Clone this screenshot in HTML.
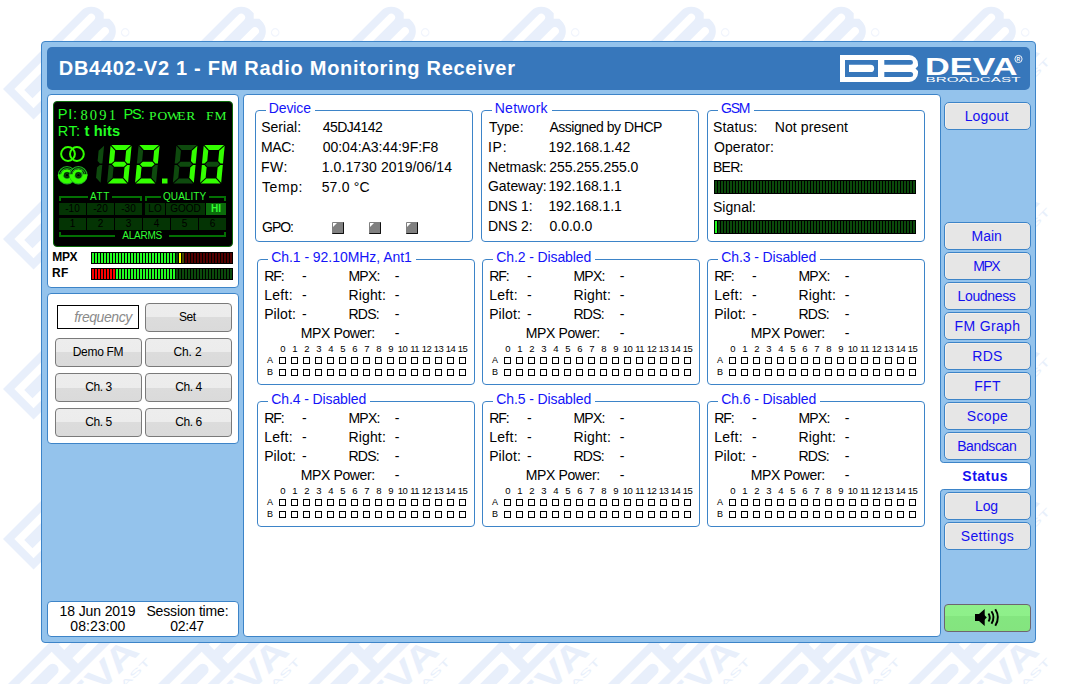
<!DOCTYPE html><html><head><meta charset="utf-8"><style>html,body{margin:0;padding:0;}body{width:1077px;height:684px;position:relative;overflow:hidden;background:#fff;font-family:'Liberation Sans', sans-serif;}</style></head><body>
<svg style="position:absolute;left:0;top:0" width="1051" height="684"><defs><g id="lg"><path fill="#e8effb" d="M0 0 H69 A9 9 0 0 1 78 9 V11 L75.5 13.5 L78 16 V18 A9 9 0 0 1 69 27 H0 Z"/><rect x="5" y="5" width="33" height="17" fill="#fff"/><path fill="#e8effb" d="M9 9.8 H30.5 A3.6 3.6 0 0 1 30.5 17.1 H9 Z"/><path fill="#fff" d="M44.3 5 H70.6 A2.4 2.4 0 0 1 70.6 9.8 H44.3 Z"/><path fill="#fff" d="M44.3 17 H70.6 A2.5 2.5 0 0 1 70.6 22 H44.3 Z"/><text x="2" y="44.8" font-family="Liberation Sans" font-weight="700" font-size="21" fill="#e8effb" textLength="75" lengthAdjust="spacingAndGlyphs">DEVA</text><text x="0.5" y="53.5" font-family="Liberation Sans" font-size="6" fill="#e8effb" textLength="77" lengthAdjust="spacingAndGlyphs">BROADCAST</text><circle cx="79" cy="29" r="2.3" fill="none" stroke="#f1f5fd" stroke-width="0.8"/></g></defs><use href="#lg" transform="translate(-297,-61) rotate(-45) scale(1.6)"/><use href="#lg" transform="translate(-297,89) rotate(-45) scale(1.6)"/><use href="#lg" transform="translate(-297,239) rotate(-45) scale(1.6)"/><use href="#lg" transform="translate(-297,389) rotate(-45) scale(1.6)"/><use href="#lg" transform="translate(-297,539) rotate(-45) scale(1.6)"/><use href="#lg" transform="translate(-297,689) rotate(-45) scale(1.6)"/><use href="#lg" transform="translate(-297,839) rotate(-45) scale(1.6)"/><use href="#lg" transform="translate(-147,-61) rotate(-45) scale(1.6)"/><use href="#lg" transform="translate(-147,89) rotate(-45) scale(1.6)"/><use href="#lg" transform="translate(-147,239) rotate(-45) scale(1.6)"/><use href="#lg" transform="translate(-147,389) rotate(-45) scale(1.6)"/><use href="#lg" transform="translate(-147,539) rotate(-45) scale(1.6)"/><use href="#lg" transform="translate(-147,689) rotate(-45) scale(1.6)"/><use href="#lg" transform="translate(-147,839) rotate(-45) scale(1.6)"/><use href="#lg" transform="translate(3,-61) rotate(-45) scale(1.6)"/><use href="#lg" transform="translate(3,89) rotate(-45) scale(1.6)"/><use href="#lg" transform="translate(3,239) rotate(-45) scale(1.6)"/><use href="#lg" transform="translate(3,389) rotate(-45) scale(1.6)"/><use href="#lg" transform="translate(3,539) rotate(-45) scale(1.6)"/><use href="#lg" transform="translate(3,689) rotate(-45) scale(1.6)"/><use href="#lg" transform="translate(3,839) rotate(-45) scale(1.6)"/><use href="#lg" transform="translate(153,-61) rotate(-45) scale(1.6)"/><use href="#lg" transform="translate(153,89) rotate(-45) scale(1.6)"/><use href="#lg" transform="translate(153,239) rotate(-45) scale(1.6)"/><use href="#lg" transform="translate(153,389) rotate(-45) scale(1.6)"/><use href="#lg" transform="translate(153,539) rotate(-45) scale(1.6)"/><use href="#lg" transform="translate(153,689) rotate(-45) scale(1.6)"/><use href="#lg" transform="translate(153,839) rotate(-45) scale(1.6)"/><use href="#lg" transform="translate(303,-61) rotate(-45) scale(1.6)"/><use href="#lg" transform="translate(303,89) rotate(-45) scale(1.6)"/><use href="#lg" transform="translate(303,239) rotate(-45) scale(1.6)"/><use href="#lg" transform="translate(303,389) rotate(-45) scale(1.6)"/><use href="#lg" transform="translate(303,539) rotate(-45) scale(1.6)"/><use href="#lg" transform="translate(303,689) rotate(-45) scale(1.6)"/><use href="#lg" transform="translate(303,839) rotate(-45) scale(1.6)"/><use href="#lg" transform="translate(453,-61) rotate(-45) scale(1.6)"/><use href="#lg" transform="translate(453,89) rotate(-45) scale(1.6)"/><use href="#lg" transform="translate(453,239) rotate(-45) scale(1.6)"/><use href="#lg" transform="translate(453,389) rotate(-45) scale(1.6)"/><use href="#lg" transform="translate(453,539) rotate(-45) scale(1.6)"/><use href="#lg" transform="translate(453,689) rotate(-45) scale(1.6)"/><use href="#lg" transform="translate(453,839) rotate(-45) scale(1.6)"/><use href="#lg" transform="translate(603,-61) rotate(-45) scale(1.6)"/><use href="#lg" transform="translate(603,89) rotate(-45) scale(1.6)"/><use href="#lg" transform="translate(603,239) rotate(-45) scale(1.6)"/><use href="#lg" transform="translate(603,389) rotate(-45) scale(1.6)"/><use href="#lg" transform="translate(603,539) rotate(-45) scale(1.6)"/><use href="#lg" transform="translate(603,689) rotate(-45) scale(1.6)"/><use href="#lg" transform="translate(603,839) rotate(-45) scale(1.6)"/><use href="#lg" transform="translate(753,-61) rotate(-45) scale(1.6)"/><use href="#lg" transform="translate(753,89) rotate(-45) scale(1.6)"/><use href="#lg" transform="translate(753,239) rotate(-45) scale(1.6)"/><use href="#lg" transform="translate(753,389) rotate(-45) scale(1.6)"/><use href="#lg" transform="translate(753,539) rotate(-45) scale(1.6)"/><use href="#lg" transform="translate(753,689) rotate(-45) scale(1.6)"/><use href="#lg" transform="translate(753,839) rotate(-45) scale(1.6)"/><use href="#lg" transform="translate(903,-61) rotate(-45) scale(1.6)"/><use href="#lg" transform="translate(903,89) rotate(-45) scale(1.6)"/><use href="#lg" transform="translate(903,239) rotate(-45) scale(1.6)"/><use href="#lg" transform="translate(903,389) rotate(-45) scale(1.6)"/><use href="#lg" transform="translate(903,539) rotate(-45) scale(1.6)"/><use href="#lg" transform="translate(903,689) rotate(-45) scale(1.6)"/><use href="#lg" transform="translate(903,839) rotate(-45) scale(1.6)"/></svg>
<div style="position:absolute;left:41px;top:41px;width:995px;height:602px;box-sizing:border-box;background:#94c3ec;border:1px solid #3d84c8;border-radius:4px;"></div>
<div style="position:absolute;left:47px;top:47px;width:983px;height:43px;box-sizing:border-box;background:#3777bb;border-radius:5px;"></div>
<div style="position:absolute;left:58.79px;top:57.77px;font-family:'Liberation Sans', sans-serif;font-size:20px;line-height:20px;font-weight:700;color:#fff;letter-spacing:0.717px;white-space:pre;"><span id="t0">DB4402-V2 1 - FM Radio Monitoring Receiver</span></div>
<svg style="position:absolute;left:838px;top:53px" width="190" height="32" viewBox="838 53 190 32"><path fill="#fff" d="M840 55 H909 A9 9 0 0 1 918 64 V66 L915.5 68.5 L918 71 V73 A9 9 0 0 1 909 82 H840 Z"/><rect x="845" y="60" width="33" height="17" fill="#3777bb"/><path fill="#fff" d="M849 64.8 H870.5 A3.6 3.6 0 0 1 870.5 72.1 H849 Z"/><path fill="#3777bb" d="M884.3 60 H910.6 A2.4 2.4 0 0 1 910.6 64.8 H884.3 Z"/><path fill="#3777bb" d="M884.3 72 H910.6 A2.5 2.5 0 0 1 910.6 77 H884.3 Z"/><text x="925" y="74.6" font-family="Liberation Sans" font-weight="700" font-size="24" fill="#fff" textLength="92.5" lengthAdjust="spacingAndGlyphs">DEVA</text><text x="925.5" y="81.8" font-family="Liberation Sans" font-size="6.4" fill="#fff" textLength="95" lengthAdjust="spacingAndGlyphs">BROADCAST</text><circle cx="1018.5" cy="59" r="3.6" fill="none" stroke="#fff" stroke-width="0.9"/><text x="1016.6" y="61" font-family="Liberation Sans" font-size="5" font-weight="700" fill="#fff">R</text></svg>
<div style="position:absolute;left:47px;top:94px;width:192px;height:194px;box-sizing:border-box;background:#fff;border:1px solid #3d84c8;border-radius:4px;"></div>
<div style="position:absolute;left:47px;top:293px;width:192px;height:151px;box-sizing:border-box;background:#fff;border:1px solid #3d84c8;border-radius:4px;"></div>
<div style="position:absolute;left:47px;top:601px;width:192px;height:36px;box-sizing:border-box;background:#fff;border:1px solid #3d84c8;border-radius:4px;"></div>
<div style="position:absolute;left:243px;top:94px;width:698px;height:543px;box-sizing:border-box;background:#fff;border:1px solid #3d84c8;border-radius:4px;"></div>
<div style="position:absolute;left:53px;top:101px;width:180px;height:146px;box-sizing:border-box;background:#000;border:1px solid #0b6b0b;border-radius:4px;"></div>
<div style="position:absolute;left:57.81px;top:107.14px;font-family:'Liberation Sans', sans-serif;font-size:14.6px;line-height:14.6px;font-weight:400;color:#22ff22;letter-spacing:0.714px;white-space:pre;"><span id="t1">PI:</span></div>
<div style="position:absolute;left:79.40px;top:107.73px;width:9.40px;text-align:center;font-family:'Liberation Serif', serif;font-size:14.5px;line-height:14.5px;color:#33ff33;white-space:pre;">8</div><div style="position:absolute;left:88.80px;top:107.73px;width:9.40px;text-align:center;font-family:'Liberation Serif', serif;font-size:14.5px;line-height:14.5px;color:#33ff33;white-space:pre;">0</div><div style="position:absolute;left:98.20px;top:107.73px;width:9.40px;text-align:center;font-family:'Liberation Serif', serif;font-size:14.5px;line-height:14.5px;color:#33ff33;white-space:pre;">9</div><div style="position:absolute;left:107.60px;top:107.73px;width:9.40px;text-align:center;font-family:'Liberation Serif', serif;font-size:14.5px;line-height:14.5px;color:#33ff33;white-space:pre;">1</div>
<div style="position:absolute;left:148.00px;top:108.56px;width:9.50px;text-align:center;font-family:'Liberation Serif', serif;font-size:13.5px;line-height:13.5px;color:#33ff33;white-space:pre;">P</div><div style="position:absolute;left:157.50px;top:108.56px;width:9.50px;text-align:center;font-family:'Liberation Serif', serif;font-size:13.5px;line-height:13.5px;color:#33ff33;white-space:pre;">O</div><div style="position:absolute;left:167.00px;top:108.56px;width:9.50px;text-align:center;font-family:'Liberation Serif', serif;font-size:13.5px;line-height:13.5px;color:#33ff33;white-space:pre;">W</div><div style="position:absolute;left:176.50px;top:108.56px;width:9.50px;text-align:center;font-family:'Liberation Serif', serif;font-size:13.5px;line-height:13.5px;color:#33ff33;white-space:pre;">E</div><div style="position:absolute;left:186.00px;top:108.56px;width:9.50px;text-align:center;font-family:'Liberation Serif', serif;font-size:13.5px;line-height:13.5px;color:#33ff33;white-space:pre;">R</div><div style="position:absolute;left:205.00px;top:108.56px;width:9.50px;text-align:center;font-family:'Liberation Serif', serif;font-size:13.5px;line-height:13.5px;color:#33ff33;white-space:pre;">F</div><div style="position:absolute;left:214.50px;top:108.56px;width:9.50px;text-align:center;font-family:'Liberation Serif', serif;font-size:13.5px;line-height:13.5px;color:#33ff33;white-space:pre;">M</div>
<div style="position:absolute;left:123.49px;top:107.14px;font-family:'Liberation Sans', sans-serif;font-size:14.6px;line-height:14.6px;font-weight:400;color:#22ff22;letter-spacing:-1.130px;white-space:pre;"><span id="t2">PS:</span></div>
<div style="position:absolute;left:57.81px;top:123.74px;font-family:'Liberation Sans', sans-serif;font-size:14.6px;line-height:14.6px;font-weight:400;color:#22ff22;letter-spacing:0.374px;white-space:pre;"><span id="t3">RT:</span></div>
<div style="position:absolute;left:84.46px;top:123.74px;font-family:'Liberation Sans', sans-serif;font-size:14.6px;line-height:14.6px;font-weight:700;color:#22ff22;letter-spacing:0.172px;white-space:pre;"><span id="t4">t hits</span></div>
<svg style="position:absolute;left:0;top:0" width="240" height="250" viewBox="0 0 240 250"><polygon points="104.09,145.70 102.40,163.55 99.90,163.55 97.63,161.05 98.62,150.70" fill="#0e4a0e"/><polygon points="102.26,164.95 100.57,182.80 96.04,177.80 97.02,167.45 99.76,164.95" fill="#0e4a0e"/><polygon points="111.36,145.00 130.96,145.00 125.48,150.00 115.88,150.00" fill="#33ff00"/><polygon points="131.59,145.70 129.90,163.55 127.40,163.55 125.13,161.05 126.12,150.70" fill="#33ff00"/><polygon points="129.76,164.95 128.07,182.80 123.54,177.80 124.52,167.45 127.26,164.95" fill="#33ff00"/><polygon points="113.17,178.50 122.77,178.50 127.30,183.50 107.70,183.50" fill="#33ff00"/><polygon points="108.76,164.95 111.26,164.95 113.52,167.45 112.54,177.80 107.07,182.80" fill="#0e4a0e"/><polygon points="110.59,145.70 115.12,150.70 114.13,161.05 111.40,163.55 108.90,163.55" fill="#33ff00"/><polygon points="112.03,164.25 114.77,161.75 124.37,161.75 126.63,164.25 123.89,166.75 114.29,166.75" fill="#33ff00"/><polygon points="139.36,145.00 158.96,145.00 153.48,150.00 143.88,150.00" fill="#33ff00"/><polygon points="159.59,145.70 157.90,163.55 155.40,163.55 153.13,161.05 154.12,150.70" fill="#33ff00"/><polygon points="157.76,164.95 156.07,182.80 151.54,177.80 152.52,167.45 155.26,164.95" fill="#0e4a0e"/><polygon points="141.17,178.50 150.78,178.50 155.30,183.50 135.70,183.50" fill="#33ff00"/><polygon points="136.76,164.95 139.26,164.95 141.52,167.45 140.54,177.80 135.07,182.80" fill="#33ff00"/><polygon points="138.59,145.70 143.12,150.70 142.13,161.05 139.40,163.55 136.90,163.55" fill="#0e4a0e"/><polygon points="140.03,164.25 142.77,161.75 152.37,161.75 154.63,164.25 151.89,166.75 142.29,166.75" fill="#33ff00"/><rect x="162" y="178.5" width="5.5" height="5" fill="#33ff00"/><polygon points="177.16,145.00 196.76,145.00 191.28,150.00 181.68,150.00" fill="#0e4a0e"/><polygon points="197.39,145.70 195.70,163.55 193.20,163.55 190.93,161.05 191.92,150.70" fill="#33ff00"/><polygon points="195.56,164.95 193.87,182.80 189.34,177.80 190.32,167.45 193.06,164.95" fill="#33ff00"/><polygon points="178.97,178.50 188.58,178.50 193.10,183.50 173.50,183.50" fill="#0e4a0e"/><polygon points="174.56,164.95 177.06,164.95 179.32,167.45 178.34,177.80 172.87,182.80" fill="#0e4a0e"/><polygon points="176.39,145.70 180.92,150.70 179.93,161.05 177.20,163.55 174.70,163.55" fill="#0e4a0e"/><polygon points="177.83,164.25 180.57,161.75 190.17,161.75 192.43,164.25 189.69,166.75 180.09,166.75" fill="#0e4a0e"/><polygon points="204.46,145.00 224.06,145.00 218.58,150.00 208.98,150.00" fill="#33ff00"/><polygon points="224.69,145.70 223.00,163.55 220.50,163.55 218.23,161.05 219.22,150.70" fill="#33ff00"/><polygon points="222.86,164.95 221.17,182.80 216.64,177.80 217.62,167.45 220.36,164.95" fill="#33ff00"/><polygon points="206.27,178.50 215.88,178.50 220.40,183.50 200.80,183.50" fill="#33ff00"/><polygon points="201.86,164.95 204.36,164.95 206.62,167.45 205.64,177.80 200.17,182.80" fill="#33ff00"/><polygon points="203.69,145.70 208.22,150.70 207.23,161.05 204.50,163.55 202.00,163.55" fill="#33ff00"/><polygon points="205.13,164.25 207.87,161.75 217.47,161.75 219.73,164.25 216.99,166.75 207.39,166.75" fill="#0e4a0e"/><circle cx="68" cy="154" r="6.9" fill="none" stroke="#33ff00" stroke-width="2"/><circle cx="76.9" cy="154" r="6.9" fill="none" stroke="#33ff00" stroke-width="2"/><circle cx="67" cy="175.2" r="9.2" fill="#1fb01f"/><path d="M59.4 175.2 A7.6 7.6 0 0 1 74.6 175.2" fill="none" stroke="#000" stroke-width="0.9"/><path d="M61.1 175.2 A5.9 5.9 0 0 1 72.9 175.2" fill="none" stroke="#000" stroke-width="0.8"/><path d="M60.2 174.2 A6.8 6.8 0 0 0 73.8 174.2" fill="none" stroke="#33ff00" stroke-width="4.6"/><path d="M62.4 175.7 A4.6 4.6 0 0 1 70.2 171.89999999999998" fill="none" stroke="#33ff00" stroke-width="2.6"/><circle cx="67" cy="175.2" r="3.3" fill="#0b5a0b"/><circle cx="67" cy="175.2" r="2.4" fill="none" stroke="#000" stroke-width="0.6"/><circle cx="67" cy="175.2" r="1.3" fill="#000"/><circle cx="78.4" cy="175.2" r="9.2" fill="#1fb01f"/><path d="M70.80000000000001 175.2 A7.6 7.6 0 0 1 86.0 175.2" fill="none" stroke="#000" stroke-width="0.9"/><path d="M72.5 175.2 A5.9 5.9 0 0 1 84.30000000000001 175.2" fill="none" stroke="#000" stroke-width="0.8"/><path d="M71.60000000000001 174.2 A6.8 6.8 0 0 0 85.2 174.2" fill="none" stroke="#33ff00" stroke-width="4.6"/><path d="M73.80000000000001 175.7 A4.6 4.6 0 0 1 81.60000000000001 171.89999999999998" fill="none" stroke="#33ff00" stroke-width="2.6"/><circle cx="78.4" cy="175.2" r="3.3" fill="#0b5a0b"/><circle cx="78.4" cy="175.2" r="2.4" fill="none" stroke="#000" stroke-width="0.6"/><circle cx="78.4" cy="175.2" r="1.3" fill="#000"/><path d="M59 196 H88 V198 H61 V201 H59 Z" fill="#037003"/><path d="M112 196 H142 V201 H140 V198 H112 Z" fill="#037003"/><path d="M145 196 H161 V198 H147 V201 H145 Z" fill="#037003"/><path d="M209 196 H226 V201 H224 V198 H209 Z" fill="#037003"/><path d="M59 237 H115 V235 H61 V232 H59 Z" fill="#037003"/><path d="M169 237 H226 V232 H224 V235 H169 Z" fill="#037003"/><rect x="59" y="203" width="27" height="12" fill="#043404"/><rect x="87" y="203" width="27" height="12" fill="#043404"/><rect x="115" y="203" width="27" height="12" fill="#043404"/><rect x="145" y="203" width="20" height="12" fill="#043404"/><rect x="166" y="203" width="39" height="12" fill="#043404"/><rect x="206" y="203" width="20" height="12" fill="#0b6b0b"/><rect x="59" y="218" width="27" height="12" fill="#043404"/><rect x="87" y="218" width="27" height="12" fill="#043404"/><rect x="115" y="218" width="27" height="12" fill="#043404"/><rect x="143" y="218" width="27" height="12" fill="#043404"/><rect x="171" y="218" width="27" height="12" fill="#043404"/><rect x="199" y="218" width="27" height="12" fill="#043404"/></svg>
<div style="position:absolute;left:89.98px;top:191.73px;font-family:'Liberation Sans', sans-serif;font-size:10px;line-height:10px;font-weight:400;color:#33ff33;letter-spacing:0.611px;white-space:pre;"><span id="t5">ATT</span></div>
<div style="position:absolute;left:163.00px;top:191.73px;font-family:'Liberation Sans', sans-serif;font-size:10px;line-height:10px;font-weight:400;color:#33ff33;letter-spacing:0.066px;white-space:pre;"><span id="t6">QUALITY</span></div>
<div style="position:absolute;left:122.33px;top:231.03px;font-family:'Liberation Sans', sans-serif;font-size:10px;line-height:10px;font-weight:400;color:#33ff33;letter-spacing:-0.239px;white-space:pre;"><span id="t7">ALARMS</span></div>
<div style="position:absolute;left:59.00px;top:204.13px;width:27px;text-align:center;font-family:'Liberation Sans', sans-serif;font-size:10px;line-height:10px;font-weight:400;color:#000;letter-spacing:0.000px;white-space:pre;"><span>-10</span></div>
<div style="position:absolute;left:87.00px;top:204.13px;width:27px;text-align:center;font-family:'Liberation Sans', sans-serif;font-size:10px;line-height:10px;font-weight:400;color:#000;letter-spacing:0.000px;white-space:pre;"><span>-20</span></div>
<div style="position:absolute;left:115.00px;top:204.13px;width:27px;text-align:center;font-family:'Liberation Sans', sans-serif;font-size:10px;line-height:10px;font-weight:400;color:#000;letter-spacing:0.000px;white-space:pre;"><span>-30</span></div>
<div style="position:absolute;left:145.00px;top:204.13px;width:20px;text-align:center;font-family:'Liberation Sans', sans-serif;font-size:10px;line-height:10px;font-weight:400;color:#000;letter-spacing:0.000px;white-space:pre;"><span>LO</span></div>
<div style="position:absolute;left:166.00px;top:204.13px;width:39px;text-align:center;font-family:'Liberation Sans', sans-serif;font-size:10px;line-height:10px;font-weight:400;color:#000;letter-spacing:0.000px;white-space:pre;"><span>GOOD</span></div>
<div style="position:absolute;left:206.00px;top:204.13px;width:20px;text-align:center;font-family:'Liberation Sans', sans-serif;font-size:10px;line-height:10px;font-weight:700;color:#33ff33;letter-spacing:0.000px;white-space:pre;"><span>HI</span></div>
<div style="position:absolute;left:59.00px;top:219.34px;width:27px;text-align:center;font-family:'Liberation Sans', sans-serif;font-size:10px;line-height:10px;font-weight:400;color:#000;letter-spacing:0.000px;white-space:pre;"><span>1</span></div>
<div style="position:absolute;left:87.00px;top:219.34px;width:27px;text-align:center;font-family:'Liberation Sans', sans-serif;font-size:10px;line-height:10px;font-weight:400;color:#000;letter-spacing:0.000px;white-space:pre;"><span>2</span></div>
<div style="position:absolute;left:115.00px;top:219.34px;width:27px;text-align:center;font-family:'Liberation Sans', sans-serif;font-size:10px;line-height:10px;font-weight:400;color:#000;letter-spacing:0.000px;white-space:pre;"><span>3</span></div>
<div style="position:absolute;left:143.00px;top:219.34px;width:27px;text-align:center;font-family:'Liberation Sans', sans-serif;font-size:10px;line-height:10px;font-weight:400;color:#000;letter-spacing:0.000px;white-space:pre;"><span>4</span></div>
<div style="position:absolute;left:171.00px;top:219.34px;width:27px;text-align:center;font-family:'Liberation Sans', sans-serif;font-size:10px;line-height:10px;font-weight:400;color:#000;letter-spacing:0.000px;white-space:pre;"><span>5</span></div>
<div style="position:absolute;left:199.00px;top:219.34px;width:27px;text-align:center;font-family:'Liberation Sans', sans-serif;font-size:10px;line-height:10px;font-weight:400;color:#000;letter-spacing:0.000px;white-space:pre;"><span>6</span></div>
<div style="position:absolute;left:52.28px;top:250.54px;font-family:'Liberation Sans', sans-serif;font-size:12px;line-height:12px;font-weight:700;color:#000;letter-spacing:-0.330px;white-space:pre;"><span id="t8">MPX</span></div>
<div style="position:absolute;left:52.00px;top:267.04px;font-family:'Liberation Sans', sans-serif;font-size:12px;line-height:12px;font-weight:700;color:#000;letter-spacing:0.300px;white-space:pre;"><span>RF</span></div>
<div style="position:absolute;left:91px;top:252px;width:142px;height:12px;background:#000;box-sizing:border-box;"></div><div style="position:absolute;left:92px;top:253px;width:140px;height:10px;background:linear-gradient(to right,#22ff22 0px,#22ff22 2px,#000 2px,#000 3px,#22ff22 3px,#22ff22 5px,#000 5px,#000 6px,#22ff22 6px,#22ff22 8px,#000 8px,#000 9px,#22ff22 9px,#22ff22 11px,#000 11px,#000 12px,#22ff22 12px,#22ff22 14px,#000 14px,#000 15px,#22ff22 15px,#22ff22 17px,#000 17px,#000 18px,#22ff22 18px,#22ff22 20px,#000 20px,#000 21px,#22ff22 21px,#22ff22 23px,#000 23px,#000 24px,#22ff22 24px,#22ff22 26px,#000 26px,#000 27px,#22ff22 27px,#22ff22 29px,#000 29px,#000 30px,#22ff22 30px,#22ff22 32px,#000 32px,#000 33px,#22ff22 33px,#22ff22 35px,#000 35px,#000 36px,#22ff22 36px,#22ff22 38px,#000 38px,#000 39px,#22ff22 39px,#22ff22 41px,#000 41px,#000 42px,#22ff22 42px,#22ff22 44px,#000 44px,#000 45px,#22ff22 45px,#22ff22 47px,#000 47px,#000 48px,#22ff22 48px,#22ff22 50px,#000 50px,#000 51px,#22ff22 51px,#22ff22 53px,#000 53px,#000 54px,#22ff22 54px,#22ff22 56px,#000 56px,#000 57px,#22ff22 57px,#22ff22 59px,#000 59px,#000 60px,#22ff22 60px,#22ff22 62px,#000 62px,#000 63px,#22ff22 63px,#22ff22 65px,#000 65px,#000 66px,#22ff22 66px,#22ff22 68px,#000 68px,#000 69px,#22ff22 69px,#22ff22 71px,#000 71px,#000 72px,#22ff22 72px,#22ff22 74px,#000 74px,#000 75px,#22ff22 75px,#22ff22 77px,#000 77px,#000 78px,#22ff22 78px,#22ff22 80px,#000 80px,#000 81px,#22ff22 81px,#22ff22 83px,#000 83px,#000 84px,#0b4a0b 84px,#0b4a0b 86px,#000 86px,#000 87px,#ffff00 87px,#ffff00 89px,#000 89px,#000 90px,#4a4a00 90px,#4a4a00 92px,#000 92px,#000 93px,#520000 93px,#520000 95px,#000 95px,#000 96px,#520000 96px,#520000 98px,#000 98px,#000 99px,#520000 99px,#520000 101px,#000 101px,#000 102px,#520000 102px,#520000 104px,#000 104px,#000 105px,#520000 105px,#520000 107px,#000 107px,#000 108px,#520000 108px,#520000 110px,#000 110px,#000 111px,#520000 111px,#520000 113px,#000 113px,#000 114px,#520000 114px,#520000 116px,#000 116px,#000 117px,#520000 117px,#520000 119px,#000 119px,#000 120px,#520000 120px,#520000 122px,#000 122px,#000 123px,#520000 123px,#520000 125px,#000 125px,#000 126px,#520000 126px,#520000 128px,#000 128px,#000 129px,#520000 129px,#520000 131px,#000 131px,#000 132px,#520000 132px,#520000 134px,#000 134px,#000 135px,#520000 135px,#520000 137px,#000 137px,#000 138px,#520000 138px,#520000 140px,#000 140px,#000 141px);"></div>
<div style="position:absolute;left:91px;top:268px;width:142px;height:12px;background:#000;box-sizing:border-box;"></div><div style="position:absolute;left:92px;top:269px;width:140px;height:10px;background:linear-gradient(to right,#ff0000 0px,#ff0000 2px,#000 2px,#000 3px,#ff0000 3px,#ff0000 5px,#000 5px,#000 6px,#ff0000 6px,#ff0000 8px,#000 8px,#000 9px,#ff0000 9px,#ff0000 11px,#000 11px,#000 12px,#ff0000 12px,#ff0000 14px,#000 14px,#000 15px,#ff0000 15px,#ff0000 17px,#000 17px,#000 18px,#ff0000 18px,#ff0000 20px,#000 20px,#000 21px,#ff0000 21px,#ff0000 23px,#000 23px,#000 24px,#22ff22 24px,#22ff22 26px,#000 26px,#000 27px,#22ff22 27px,#22ff22 29px,#000 29px,#000 30px,#22ff22 30px,#22ff22 32px,#000 32px,#000 33px,#22ff22 33px,#22ff22 35px,#000 35px,#000 36px,#22ff22 36px,#22ff22 38px,#000 38px,#000 39px,#22ff22 39px,#22ff22 41px,#000 41px,#000 42px,#22ff22 42px,#22ff22 44px,#000 44px,#000 45px,#22ff22 45px,#22ff22 47px,#000 47px,#000 48px,#22ff22 48px,#22ff22 50px,#000 50px,#000 51px,#22ff22 51px,#22ff22 53px,#000 53px,#000 54px,#22ff22 54px,#22ff22 56px,#000 56px,#000 57px,#22ff22 57px,#22ff22 59px,#000 59px,#000 60px,#22ff22 60px,#22ff22 62px,#000 62px,#000 63px,#22ff22 63px,#22ff22 65px,#000 65px,#000 66px,#22ff22 66px,#22ff22 68px,#000 68px,#000 69px,#22ff22 69px,#22ff22 71px,#000 71px,#000 72px,#22ff22 72px,#22ff22 74px,#000 74px,#000 75px,#22ff22 75px,#22ff22 77px,#000 77px,#000 78px,#22ff22 78px,#22ff22 80px,#000 80px,#000 81px,#22ff22 81px,#22ff22 83px,#000 83px,#000 84px,#0b4a0b 84px,#0b4a0b 86px,#000 86px,#000 87px,#0b4a0b 87px,#0b4a0b 89px,#000 89px,#000 90px,#0b4a0b 90px,#0b4a0b 92px,#000 92px,#000 93px,#0b4a0b 93px,#0b4a0b 95px,#000 95px,#000 96px,#0b4a0b 96px,#0b4a0b 98px,#000 98px,#000 99px,#0b4a0b 99px,#0b4a0b 101px,#000 101px,#000 102px,#0b4a0b 102px,#0b4a0b 104px,#000 104px,#000 105px,#0b4a0b 105px,#0b4a0b 107px,#000 107px,#000 108px,#0b4a0b 108px,#0b4a0b 110px,#000 110px,#000 111px,#0b4a0b 111px,#0b4a0b 113px,#000 113px,#000 114px,#0b4a0b 114px,#0b4a0b 116px,#000 116px,#000 117px,#0b4a0b 117px,#0b4a0b 119px,#000 119px,#000 120px,#0b4a0b 120px,#0b4a0b 122px,#000 122px,#000 123px,#0b4a0b 123px,#0b4a0b 125px,#000 125px,#000 126px,#0b4a0b 126px,#0b4a0b 128px,#000 128px,#000 129px,#0b4a0b 129px,#0b4a0b 131px,#000 131px,#000 132px,#0b4a0b 132px,#0b4a0b 134px,#000 134px,#000 135px,#0b4a0b 135px,#0b4a0b 137px,#000 137px,#000 138px,#0b4a0b 138px,#0b4a0b 140px,#000 140px,#000 141px);"></div>
<div style="position:absolute;left:57px;top:305px;width:82px;height:24px;box-sizing:border-box;background:#fff;border:1px solid #000;"></div>
<div style="position:absolute;left:74.27px;top:309.65px;font-family:'Liberation Sans', sans-serif;font-size:14px;line-height:14px;font-weight:400;color:#8a8a8a;letter-spacing:-0.446px;white-space:pre;font-style:italic;"><span id="t9">frequency</span></div>
<div style="position:absolute;left:145px;top:303px;width:87px;height:29px;box-sizing:border-box;background:linear-gradient(#ededed 0,#ececec 50%,#dcdcdc 50%,#dadada 100%);border:1px solid #7a7a7a;border-radius:4px;"></div>
<div style="position:absolute;left:143.73px;top:310.74px;width:87px;text-align:center;font-family:'Liberation Sans', sans-serif;font-size:12px;line-height:12px;font-weight:400;color:#000;letter-spacing:-0.466px;white-space:pre;"><span id="t10">Set</span></div>
<div style="position:absolute;left:55px;top:338px;width:87px;height:29px;box-sizing:border-box;background:linear-gradient(#ededed 0,#ececec 50%,#dcdcdc 50%,#dadada 100%);border:1px solid #7a7a7a;border-radius:4px;"></div>
<div style="position:absolute;left:54.51px;top:345.74px;width:87px;text-align:center;font-family:'Liberation Sans', sans-serif;font-size:12px;line-height:12px;font-weight:400;color:#000;letter-spacing:-0.301px;white-space:pre;"><span id="t11">Demo FM</span></div>
<div style="position:absolute;left:145px;top:338px;width:87px;height:29px;box-sizing:border-box;background:linear-gradient(#ededed 0,#ececec 50%,#dcdcdc 50%,#dadada 100%);border:1px solid #7a7a7a;border-radius:4px;"></div>
<div style="position:absolute;left:144.04px;top:345.74px;width:87px;text-align:center;font-family:'Liberation Sans', sans-serif;font-size:12px;line-height:12px;font-weight:400;color:#000;letter-spacing:-0.137px;white-space:pre;"><span id="t12">Ch. 2</span></div>
<div style="position:absolute;left:55px;top:373px;width:87px;height:29px;box-sizing:border-box;background:linear-gradient(#ededed 0,#ececec 50%,#dcdcdc 50%,#dadada 100%);border:1px solid #7a7a7a;border-radius:4px;"></div>
<div style="position:absolute;left:55.00px;top:380.74px;width:87px;text-align:center;font-family:'Liberation Sans', sans-serif;font-size:12px;line-height:12px;font-weight:400;color:#000;letter-spacing:-0.400px;white-space:pre;"><span>Ch. 3</span></div>
<div style="position:absolute;left:145px;top:373px;width:87px;height:29px;box-sizing:border-box;background:linear-gradient(#ededed 0,#ececec 50%,#dcdcdc 50%,#dadada 100%);border:1px solid #7a7a7a;border-radius:4px;"></div>
<div style="position:absolute;left:145.00px;top:380.74px;width:87px;text-align:center;font-family:'Liberation Sans', sans-serif;font-size:12px;line-height:12px;font-weight:400;color:#000;letter-spacing:-0.400px;white-space:pre;"><span>Ch. 4</span></div>
<div style="position:absolute;left:55px;top:408px;width:87px;height:29px;box-sizing:border-box;background:linear-gradient(#ededed 0,#ececec 50%,#dcdcdc 50%,#dadada 100%);border:1px solid #7a7a7a;border-radius:4px;"></div>
<div style="position:absolute;left:55.00px;top:415.74px;width:87px;text-align:center;font-family:'Liberation Sans', sans-serif;font-size:12px;line-height:12px;font-weight:400;color:#000;letter-spacing:-0.400px;white-space:pre;"><span>Ch. 5</span></div>
<div style="position:absolute;left:145px;top:408px;width:87px;height:29px;box-sizing:border-box;background:linear-gradient(#ededed 0,#ececec 50%,#dcdcdc 50%,#dadada 100%);border:1px solid #7a7a7a;border-radius:4px;"></div>
<div style="position:absolute;left:145.00px;top:415.74px;width:87px;text-align:center;font-family:'Liberation Sans', sans-serif;font-size:12px;line-height:12px;font-weight:400;color:#000;letter-spacing:-0.400px;white-space:pre;"><span>Ch. 6</span></div>
<div style="position:absolute;left:49.44px;top:603.65px;width:96px;text-align:center;font-family:'Liberation Sans', sans-serif;font-size:14px;line-height:14px;font-weight:400;color:#000;letter-spacing:-0.118px;white-space:pre;"><span id="t13">18 Jun 2019</span></div>
<div style="position:absolute;left:49.90px;top:618.55px;width:96px;text-align:center;font-family:'Liberation Sans', sans-serif;font-size:14px;line-height:14px;font-weight:400;color:#000;letter-spacing:0.087px;white-space:pre;"><span id="t14">08:23:00</span></div>
<div style="position:absolute;left:139.95px;top:603.65px;width:95px;text-align:center;font-family:'Liberation Sans', sans-serif;font-size:14px;line-height:14px;font-weight:400;color:#000;letter-spacing:-0.152px;white-space:pre;"><span id="t15">Session time:</span></div>
<div style="position:absolute;left:139.61px;top:618.55px;width:95px;text-align:center;font-family:'Liberation Sans', sans-serif;font-size:14px;line-height:14px;font-weight:400;color:#000;letter-spacing:-0.313px;white-space:pre;"><span id="t16">02:47</span></div>
<div style="position:absolute;left:255px;top:110px;width:218px;height:132px;box-sizing:border-box;border:1px solid #3d84c8;border-radius:4px;"></div>
<div style="position:absolute;left:266px;top:108px;width:49.0px;height:5px;background:#fff;"></div>
<div style="position:absolute;left:268.77px;top:100.65px;font-family:'Liberation Sans', sans-serif;font-size:14px;line-height:14px;font-weight:400;color:#1414f8;letter-spacing:-0.109px;white-space:pre;"><span id="t17">Device</span></div>
<div style="position:absolute;left:261.13px;top:119.85px;font-family:'Liberation Sans', sans-serif;font-size:14px;line-height:14px;font-weight:400;color:#000;letter-spacing:0.036px;white-space:pre;"><span id="t18">Serial:</span></div>
<div style="position:absolute;left:322.71px;top:119.85px;font-family:'Liberation Sans', sans-serif;font-size:14px;line-height:14px;font-weight:400;color:#000;letter-spacing:-0.533px;white-space:pre;"><span id="t19">45DJ4142</span></div>
<div style="position:absolute;left:261.00px;top:139.85px;font-family:'Liberation Sans', sans-serif;font-size:14px;line-height:14px;font-weight:400;color:#000;letter-spacing:-0.343px;white-space:pre;"><span id="t20">MAC:</span></div>
<div style="position:absolute;left:322.71px;top:139.85px;font-family:'Liberation Sans', sans-serif;font-size:14px;line-height:14px;font-weight:400;color:#000;letter-spacing:-0.019px;white-space:pre;"><span id="t21">00:04:A3:44:9F:F8</span></div>
<div style="position:absolute;left:261.00px;top:159.85px;font-family:'Liberation Sans', sans-serif;font-size:14px;line-height:14px;font-weight:400;color:#000;letter-spacing:0.450px;white-space:pre;"><span id="t22">FW:</span></div>
<div style="position:absolute;left:321.71px;top:159.85px;font-family:'Liberation Sans', sans-serif;font-size:14px;line-height:14px;font-weight:400;color:#000;letter-spacing:0.099px;white-space:pre;"><span id="t23">1.0.1730 2019/06/14</span></div>
<div style="position:absolute;left:262.00px;top:179.85px;font-family:'Liberation Sans', sans-serif;font-size:14px;line-height:14px;font-weight:400;color:#000;letter-spacing:0.563px;white-space:pre;"><span id="t24">Temp:</span></div>
<div style="position:absolute;left:321.66px;top:179.85px;font-family:'Liberation Sans', sans-serif;font-size:14px;line-height:14px;font-weight:400;color:#000;letter-spacing:0.175px;white-space:pre;"><span id="t25">57.0 °C</span></div>
<div style="position:absolute;left:262.00px;top:219.65px;font-family:'Liberation Sans', sans-serif;font-size:14px;line-height:14px;font-weight:400;color:#000;letter-spacing:-1.009px;white-space:pre;"><span id="t26">GPO:</span></div>
<div style="position:absolute;left:332px;top:222px;width:12px;height:12px;box-sizing:border-box;background:#808080;border-right:1px solid #111;border-bottom:1px solid #111;border-radius:1px;"></div>
<div style="position:absolute;left:333px;top:223px;width:4px;height:4px;background:#fff;clip-path:polygon(0 0,100% 0,0 100%);"></div>
<div style="position:absolute;left:369px;top:222px;width:12px;height:12px;box-sizing:border-box;background:#808080;border-right:1px solid #111;border-bottom:1px solid #111;border-radius:1px;"></div>
<div style="position:absolute;left:370px;top:223px;width:4px;height:4px;background:#fff;clip-path:polygon(0 0,100% 0,0 100%);"></div>
<div style="position:absolute;left:406px;top:222px;width:12px;height:12px;box-sizing:border-box;background:#808080;border-right:1px solid #111;border-bottom:1px solid #111;border-radius:1px;"></div>
<div style="position:absolute;left:407px;top:223px;width:4px;height:4px;background:#fff;clip-path:polygon(0 0,100% 0,0 100%);"></div>
<div style="position:absolute;left:481px;top:110px;width:218px;height:132px;box-sizing:border-box;border:1px solid #3d84c8;border-radius:4px;"></div>
<div style="position:absolute;left:492px;top:108px;width:59.5px;height:5px;background:#fff;"></div>
<div style="position:absolute;left:494.77px;top:100.65px;font-family:'Liberation Sans', sans-serif;font-size:14px;line-height:14px;font-weight:400;color:#1414f8;letter-spacing:0.240px;white-space:pre;"><span id="t27">Network</span></div>
<div style="position:absolute;left:489.04px;top:119.75px;font-family:'Liberation Sans', sans-serif;font-size:14px;line-height:14px;font-weight:400;color:#000;letter-spacing:0.085px;white-space:pre;"><span id="t28">Type:</span></div>
<div style="position:absolute;left:549.38px;top:119.75px;font-family:'Liberation Sans', sans-serif;font-size:14px;line-height:14px;font-weight:400;color:#000;letter-spacing:-0.454px;white-space:pre;"><span id="t29">Assigned by DHCP</span></div>
<div style="position:absolute;left:488.04px;top:139.65px;font-family:'Liberation Sans', sans-serif;font-size:14px;line-height:14px;font-weight:400;color:#000;letter-spacing:0.696px;white-space:pre;"><span id="t30">IP:</span></div>
<div style="position:absolute;left:548.38px;top:139.65px;font-family:'Liberation Sans', sans-serif;font-size:14px;line-height:14px;font-weight:400;color:#000;letter-spacing:0.013px;white-space:pre;"><span id="t31">192.168.1.42</span></div>
<div style="position:absolute;left:487.99px;top:159.55px;font-family:'Liberation Sans', sans-serif;font-size:14px;line-height:14px;font-weight:400;color:#000;letter-spacing:-0.057px;white-space:pre;"><span id="t32">Netmask:</span></div>
<div style="position:absolute;left:549.23px;top:159.55px;font-family:'Liberation Sans', sans-serif;font-size:14px;line-height:14px;font-weight:400;color:#000;letter-spacing:-0.037px;white-space:pre;"><span id="t33">255.255.255.0</span></div>
<div style="position:absolute;left:487.99px;top:179.45px;font-family:'Liberation Sans', sans-serif;font-size:14px;line-height:14px;font-weight:400;color:#000;letter-spacing:-0.058px;white-space:pre;"><span id="t34">Gateway:</span></div>
<div style="position:absolute;left:548.38px;top:179.45px;font-family:'Liberation Sans', sans-serif;font-size:14px;line-height:14px;font-weight:400;color:#000;letter-spacing:-0.051px;white-space:pre;"><span id="t35">192.168.1.1</span></div>
<div style="position:absolute;left:487.99px;top:199.35px;font-family:'Liberation Sans', sans-serif;font-size:14px;line-height:14px;font-weight:400;color:#000;letter-spacing:-0.105px;white-space:pre;"><span id="t36">DNS 1:</span></div>
<div style="position:absolute;left:548.38px;top:199.35px;font-family:'Liberation Sans', sans-serif;font-size:14px;line-height:14px;font-weight:400;color:#000;letter-spacing:-0.051px;white-space:pre;"><span id="t37">192.168.1.1</span></div>
<div style="position:absolute;left:487.99px;top:219.25px;font-family:'Liberation Sans', sans-serif;font-size:14px;line-height:14px;font-weight:400;color:#000;letter-spacing:-0.105px;white-space:pre;"><span id="t38">DNS 2:</span></div>
<div style="position:absolute;left:549.43px;top:219.25px;font-family:'Liberation Sans', sans-serif;font-size:14px;line-height:14px;font-weight:400;color:#000;letter-spacing:0.018px;white-space:pre;"><span id="t39">0.0.0.0</span></div>
<div style="position:absolute;left:707px;top:110px;width:218px;height:132px;box-sizing:border-box;border:1px solid #3d84c8;border-radius:4px;"></div>
<div style="position:absolute;left:718px;top:108px;width:36.2px;height:5px;background:#fff;"></div>
<div style="position:absolute;left:720.98px;top:100.65px;font-family:'Liberation Sans', sans-serif;font-size:14px;line-height:14px;font-weight:400;color:#1414f8;letter-spacing:-1.214px;white-space:pre;"><span id="t40">GSM</span></div>
<div style="position:absolute;left:713.00px;top:120.15px;font-family:'Liberation Sans', sans-serif;font-size:14px;line-height:14px;font-weight:400;color:#000;letter-spacing:0.142px;white-space:pre;"><span id="t41">Status:</span></div>
<div style="position:absolute;left:774.82px;top:120.15px;font-family:'Liberation Sans', sans-serif;font-size:14px;line-height:14px;font-weight:400;color:#000;letter-spacing:0.075px;white-space:pre;"><span id="t42">Not present</span></div>
<div style="position:absolute;left:714.00px;top:139.85px;font-family:'Liberation Sans', sans-serif;font-size:14px;line-height:14px;font-weight:400;color:#000;letter-spacing:0.081px;white-space:pre;"><span id="t43">Operator:</span></div>
<div style="position:absolute;left:713.00px;top:159.65px;font-family:'Liberation Sans', sans-serif;font-size:14px;line-height:14px;font-weight:400;color:#000;letter-spacing:-0.738px;white-space:pre;"><span id="t44">BER:</span></div>
<div style="position:absolute;left:713.00px;top:199.65px;font-family:'Liberation Sans', sans-serif;font-size:14px;line-height:14px;font-weight:400;color:#000;letter-spacing:0.028px;white-space:pre;"><span id="t45">Signal:</span></div>
<div style="position:absolute;left:714px;top:180px;width:202px;height:14px;background:#000;box-sizing:border-box;"></div><div style="position:absolute;left:715px;top:181px;width:200px;height:12px;background:linear-gradient(to right,#0b4a0b 0px,#0b4a0b 2px,#000 2px,#000 3px,#0b4a0b 3px,#0b4a0b 5px,#000 5px,#000 6px,#0b4a0b 6px,#0b4a0b 8px,#000 8px,#000 9px,#0b4a0b 9px,#0b4a0b 11px,#000 11px,#000 12px,#0b4a0b 12px,#0b4a0b 14px,#000 14px,#000 15px,#0b4a0b 15px,#0b4a0b 17px,#000 17px,#000 18px,#0b4a0b 18px,#0b4a0b 20px,#000 20px,#000 21px,#0b4a0b 21px,#0b4a0b 23px,#000 23px,#000 24px,#0b4a0b 24px,#0b4a0b 26px,#000 26px,#000 27px,#0b4a0b 27px,#0b4a0b 29px,#000 29px,#000 30px,#0b4a0b 30px,#0b4a0b 32px,#000 32px,#000 33px,#0b4a0b 33px,#0b4a0b 35px,#000 35px,#000 36px,#0b4a0b 36px,#0b4a0b 38px,#000 38px,#000 39px,#0b4a0b 39px,#0b4a0b 41px,#000 41px,#000 42px,#0b4a0b 42px,#0b4a0b 44px,#000 44px,#000 45px,#0b4a0b 45px,#0b4a0b 47px,#000 47px,#000 48px,#0b4a0b 48px,#0b4a0b 50px,#000 50px,#000 51px,#0b4a0b 51px,#0b4a0b 53px,#000 53px,#000 54px,#0b4a0b 54px,#0b4a0b 56px,#000 56px,#000 57px,#0b4a0b 57px,#0b4a0b 59px,#000 59px,#000 60px,#0b4a0b 60px,#0b4a0b 62px,#000 62px,#000 63px,#0b4a0b 63px,#0b4a0b 65px,#000 65px,#000 66px,#0b4a0b 66px,#0b4a0b 68px,#000 68px,#000 69px,#0b4a0b 69px,#0b4a0b 71px,#000 71px,#000 72px,#0b4a0b 72px,#0b4a0b 74px,#000 74px,#000 75px,#0b4a0b 75px,#0b4a0b 77px,#000 77px,#000 78px,#0b4a0b 78px,#0b4a0b 80px,#000 80px,#000 81px,#0b4a0b 81px,#0b4a0b 83px,#000 83px,#000 84px,#0b4a0b 84px,#0b4a0b 86px,#000 86px,#000 87px,#0b4a0b 87px,#0b4a0b 89px,#000 89px,#000 90px,#0b4a0b 90px,#0b4a0b 92px,#000 92px,#000 93px,#0b4a0b 93px,#0b4a0b 95px,#000 95px,#000 96px,#0b4a0b 96px,#0b4a0b 98px,#000 98px,#000 99px,#0b4a0b 99px,#0b4a0b 101px,#000 101px,#000 102px,#0b4a0b 102px,#0b4a0b 104px,#000 104px,#000 105px,#0b4a0b 105px,#0b4a0b 107px,#000 107px,#000 108px,#0b4a0b 108px,#0b4a0b 110px,#000 110px,#000 111px,#0b4a0b 111px,#0b4a0b 113px,#000 113px,#000 114px,#0b4a0b 114px,#0b4a0b 116px,#000 116px,#000 117px,#0b4a0b 117px,#0b4a0b 119px,#000 119px,#000 120px,#0b4a0b 120px,#0b4a0b 122px,#000 122px,#000 123px,#0b4a0b 123px,#0b4a0b 125px,#000 125px,#000 126px,#0b4a0b 126px,#0b4a0b 128px,#000 128px,#000 129px,#0b4a0b 129px,#0b4a0b 131px,#000 131px,#000 132px,#0b4a0b 132px,#0b4a0b 134px,#000 134px,#000 135px,#0b4a0b 135px,#0b4a0b 137px,#000 137px,#000 138px,#0b4a0b 138px,#0b4a0b 140px,#000 140px,#000 141px,#0b4a0b 141px,#0b4a0b 143px,#000 143px,#000 144px,#0b4a0b 144px,#0b4a0b 146px,#000 146px,#000 147px,#0b4a0b 147px,#0b4a0b 149px,#000 149px,#000 150px,#0b4a0b 150px,#0b4a0b 152px,#000 152px,#000 153px,#0b4a0b 153px,#0b4a0b 155px,#000 155px,#000 156px,#0b4a0b 156px,#0b4a0b 158px,#000 158px,#000 159px,#0b4a0b 159px,#0b4a0b 161px,#000 161px,#000 162px,#0b4a0b 162px,#0b4a0b 164px,#000 164px,#000 165px,#0b4a0b 165px,#0b4a0b 167px,#000 167px,#000 168px,#0b4a0b 168px,#0b4a0b 170px,#000 170px,#000 171px,#0b4a0b 171px,#0b4a0b 173px,#000 173px,#000 174px,#0b4a0b 174px,#0b4a0b 176px,#000 176px,#000 177px,#0b4a0b 177px,#0b4a0b 179px,#000 179px,#000 180px,#0b4a0b 180px,#0b4a0b 182px,#000 182px,#000 183px,#0b4a0b 183px,#0b4a0b 185px,#000 185px,#000 186px,#0b4a0b 186px,#0b4a0b 188px,#000 188px,#000 189px,#0b4a0b 189px,#0b4a0b 191px,#000 191px,#000 192px,#0b4a0b 192px,#0b4a0b 194px,#000 194px,#000 195px,#0b4a0b 195px,#0b4a0b 197px,#000 197px,#000 198px,#0b4a0b 198px,#0b4a0b 200px,#000 200px,#000 201px);"></div>
<div style="position:absolute;left:714px;top:220px;width:202px;height:14px;background:#000;box-sizing:border-box;"></div><div style="position:absolute;left:715px;top:221px;width:200px;height:12px;background:linear-gradient(to right,#22ff22 0px,#22ff22 2px,#000 2px,#000 3px,#0b4a0b 3px,#0b4a0b 5px,#000 5px,#000 6px,#0b4a0b 6px,#0b4a0b 8px,#000 8px,#000 9px,#0b4a0b 9px,#0b4a0b 11px,#000 11px,#000 12px,#0b4a0b 12px,#0b4a0b 14px,#000 14px,#000 15px,#0b4a0b 15px,#0b4a0b 17px,#000 17px,#000 18px,#0b4a0b 18px,#0b4a0b 20px,#000 20px,#000 21px,#0b4a0b 21px,#0b4a0b 23px,#000 23px,#000 24px,#0b4a0b 24px,#0b4a0b 26px,#000 26px,#000 27px,#0b4a0b 27px,#0b4a0b 29px,#000 29px,#000 30px,#0b4a0b 30px,#0b4a0b 32px,#000 32px,#000 33px,#0b4a0b 33px,#0b4a0b 35px,#000 35px,#000 36px,#0b4a0b 36px,#0b4a0b 38px,#000 38px,#000 39px,#0b4a0b 39px,#0b4a0b 41px,#000 41px,#000 42px,#0b4a0b 42px,#0b4a0b 44px,#000 44px,#000 45px,#0b4a0b 45px,#0b4a0b 47px,#000 47px,#000 48px,#0b4a0b 48px,#0b4a0b 50px,#000 50px,#000 51px,#0b4a0b 51px,#0b4a0b 53px,#000 53px,#000 54px,#0b4a0b 54px,#0b4a0b 56px,#000 56px,#000 57px,#0b4a0b 57px,#0b4a0b 59px,#000 59px,#000 60px,#0b4a0b 60px,#0b4a0b 62px,#000 62px,#000 63px,#0b4a0b 63px,#0b4a0b 65px,#000 65px,#000 66px,#0b4a0b 66px,#0b4a0b 68px,#000 68px,#000 69px,#0b4a0b 69px,#0b4a0b 71px,#000 71px,#000 72px,#0b4a0b 72px,#0b4a0b 74px,#000 74px,#000 75px,#0b4a0b 75px,#0b4a0b 77px,#000 77px,#000 78px,#0b4a0b 78px,#0b4a0b 80px,#000 80px,#000 81px,#0b4a0b 81px,#0b4a0b 83px,#000 83px,#000 84px,#0b4a0b 84px,#0b4a0b 86px,#000 86px,#000 87px,#0b4a0b 87px,#0b4a0b 89px,#000 89px,#000 90px,#0b4a0b 90px,#0b4a0b 92px,#000 92px,#000 93px,#0b4a0b 93px,#0b4a0b 95px,#000 95px,#000 96px,#0b4a0b 96px,#0b4a0b 98px,#000 98px,#000 99px,#0b4a0b 99px,#0b4a0b 101px,#000 101px,#000 102px,#0b4a0b 102px,#0b4a0b 104px,#000 104px,#000 105px,#0b4a0b 105px,#0b4a0b 107px,#000 107px,#000 108px,#0b4a0b 108px,#0b4a0b 110px,#000 110px,#000 111px,#0b4a0b 111px,#0b4a0b 113px,#000 113px,#000 114px,#0b4a0b 114px,#0b4a0b 116px,#000 116px,#000 117px,#0b4a0b 117px,#0b4a0b 119px,#000 119px,#000 120px,#0b4a0b 120px,#0b4a0b 122px,#000 122px,#000 123px,#0b4a0b 123px,#0b4a0b 125px,#000 125px,#000 126px,#0b4a0b 126px,#0b4a0b 128px,#000 128px,#000 129px,#0b4a0b 129px,#0b4a0b 131px,#000 131px,#000 132px,#0b4a0b 132px,#0b4a0b 134px,#000 134px,#000 135px,#0b4a0b 135px,#0b4a0b 137px,#000 137px,#000 138px,#0b4a0b 138px,#0b4a0b 140px,#000 140px,#000 141px,#0b4a0b 141px,#0b4a0b 143px,#000 143px,#000 144px,#0b4a0b 144px,#0b4a0b 146px,#000 146px,#000 147px,#0b4a0b 147px,#0b4a0b 149px,#000 149px,#000 150px,#0b4a0b 150px,#0b4a0b 152px,#000 152px,#000 153px,#0b4a0b 153px,#0b4a0b 155px,#000 155px,#000 156px,#0b4a0b 156px,#0b4a0b 158px,#000 158px,#000 159px,#0b4a0b 159px,#0b4a0b 161px,#000 161px,#000 162px,#0b4a0b 162px,#0b4a0b 164px,#000 164px,#000 165px,#0b4a0b 165px,#0b4a0b 167px,#000 167px,#000 168px,#0b4a0b 168px,#0b4a0b 170px,#000 170px,#000 171px,#0b4a0b 171px,#0b4a0b 173px,#000 173px,#000 174px,#0b4a0b 174px,#0b4a0b 176px,#000 176px,#000 177px,#0b4a0b 177px,#0b4a0b 179px,#000 179px,#000 180px,#0b4a0b 180px,#0b4a0b 182px,#000 182px,#000 183px,#0b4a0b 183px,#0b4a0b 185px,#000 185px,#000 186px,#0b4a0b 186px,#0b4a0b 188px,#000 188px,#000 189px,#0b4a0b 189px,#0b4a0b 191px,#000 191px,#000 192px,#0b4a0b 192px,#0b4a0b 194px,#000 194px,#000 195px,#0b4a0b 195px,#0b4a0b 197px,#000 197px,#000 198px,#0b4a0b 198px,#0b4a0b 200px,#000 200px,#000 201px);"></div>
<div style="position:absolute;left:257px;top:259px;width:218px;height:126px;box-sizing:border-box;border:1px solid #3d84c8;border-radius:4px;"></div>
<div style="position:absolute;left:268px;top:257px;width:148.1px;height:5px;background:#fff;"></div>
<div style="position:absolute;left:271.21px;top:249.65px;font-family:'Liberation Sans', sans-serif;font-size:14px;line-height:14px;font-weight:400;color:#1414f8;letter-spacing:-0.049px;white-space:pre;"><span id="t46">Ch.1 - 92.10MHz, Ant1</span></div>
<div style="position:absolute;left:264.14px;top:268.75px;font-family:'Liberation Sans', sans-serif;font-size:14px;line-height:14px;font-weight:400;color:#000;letter-spacing:-0.986px;white-space:pre;"><span id="t47">RF:</span></div>
<div style="position:absolute;left:301.90px;top:268.75px;font-family:'Liberation Sans', sans-serif;font-size:14px;line-height:14px;font-weight:400;color:#000;letter-spacing:0.000px;white-space:pre;"><span>-</span></div>
<div style="position:absolute;left:348.39px;top:268.75px;font-family:'Liberation Sans', sans-serif;font-size:14px;line-height:14px;font-weight:400;color:#000;letter-spacing:-0.745px;white-space:pre;"><span id="t48">MPX:</span></div>
<div style="position:absolute;left:394.80px;top:268.75px;font-family:'Liberation Sans', sans-serif;font-size:14px;line-height:14px;font-weight:400;color:#000;letter-spacing:0.000px;white-space:pre;"><span>-</span></div>
<div style="position:absolute;left:264.14px;top:287.85px;font-family:'Liberation Sans', sans-serif;font-size:14px;line-height:14px;font-weight:400;color:#000;letter-spacing:0.300px;white-space:pre;"><span id="t49">Left:</span></div>
<div style="position:absolute;left:301.90px;top:287.85px;font-family:'Liberation Sans', sans-serif;font-size:14px;line-height:14px;font-weight:400;color:#000;letter-spacing:0.000px;white-space:pre;"><span>-</span></div>
<div style="position:absolute;left:348.39px;top:287.85px;font-family:'Liberation Sans', sans-serif;font-size:14px;line-height:14px;font-weight:400;color:#000;letter-spacing:0.173px;white-space:pre;"><span id="t50">Right:</span></div>
<div style="position:absolute;left:394.80px;top:287.85px;font-family:'Liberation Sans', sans-serif;font-size:14px;line-height:14px;font-weight:400;color:#000;letter-spacing:0.000px;white-space:pre;"><span>-</span></div>
<div style="position:absolute;left:264.14px;top:306.75px;font-family:'Liberation Sans', sans-serif;font-size:14px;line-height:14px;font-weight:400;color:#000;letter-spacing:0.124px;white-space:pre;"><span id="t51">Pilot:</span></div>
<div style="position:absolute;left:301.90px;top:306.75px;font-family:'Liberation Sans', sans-serif;font-size:14px;line-height:14px;font-weight:400;color:#000;letter-spacing:0.000px;white-space:pre;"><span>-</span></div>
<div style="position:absolute;left:348.39px;top:306.75px;font-family:'Liberation Sans', sans-serif;font-size:14px;line-height:14px;font-weight:400;color:#000;letter-spacing:-0.706px;white-space:pre;"><span id="t52">RDS:</span></div>
<div style="position:absolute;left:394.80px;top:306.75px;font-family:'Liberation Sans', sans-serif;font-size:14px;line-height:14px;font-weight:400;color:#000;letter-spacing:0.000px;white-space:pre;"><span>-</span></div>
<div style="position:absolute;left:300.72px;top:325.85px;font-family:'Liberation Sans', sans-serif;font-size:14px;line-height:14px;font-weight:400;color:#000;letter-spacing:-0.372px;white-space:pre;"><span id="t53">MPX Power:</span></div>
<div style="position:absolute;left:394.80px;top:325.85px;font-family:'Liberation Sans', sans-serif;font-size:14px;line-height:14px;font-weight:400;color:#000;letter-spacing:0.000px;white-space:pre;"><span>-</span></div>
<div style="position:absolute;left:272.5px;top:343.66px;width:20px;text-align:center;font-family:'Liberation Sans', sans-serif;font-size:9.5px;line-height:9.5px;letter-spacing:-0.6px;color:#000;">0</div><div style="position:absolute;left:284.5px;top:343.66px;width:20px;text-align:center;font-family:'Liberation Sans', sans-serif;font-size:9.5px;line-height:9.5px;letter-spacing:-0.6px;color:#000;">1</div><div style="position:absolute;left:296.5px;top:343.66px;width:20px;text-align:center;font-family:'Liberation Sans', sans-serif;font-size:9.5px;line-height:9.5px;letter-spacing:-0.6px;color:#000;">2</div><div style="position:absolute;left:308.5px;top:343.66px;width:20px;text-align:center;font-family:'Liberation Sans', sans-serif;font-size:9.5px;line-height:9.5px;letter-spacing:-0.6px;color:#000;">3</div><div style="position:absolute;left:320.5px;top:343.66px;width:20px;text-align:center;font-family:'Liberation Sans', sans-serif;font-size:9.5px;line-height:9.5px;letter-spacing:-0.6px;color:#000;">4</div><div style="position:absolute;left:332.5px;top:343.66px;width:20px;text-align:center;font-family:'Liberation Sans', sans-serif;font-size:9.5px;line-height:9.5px;letter-spacing:-0.6px;color:#000;">5</div><div style="position:absolute;left:344.5px;top:343.66px;width:20px;text-align:center;font-family:'Liberation Sans', sans-serif;font-size:9.5px;line-height:9.5px;letter-spacing:-0.6px;color:#000;">6</div><div style="position:absolute;left:356.5px;top:343.66px;width:20px;text-align:center;font-family:'Liberation Sans', sans-serif;font-size:9.5px;line-height:9.5px;letter-spacing:-0.6px;color:#000;">7</div><div style="position:absolute;left:368.5px;top:343.66px;width:20px;text-align:center;font-family:'Liberation Sans', sans-serif;font-size:9.5px;line-height:9.5px;letter-spacing:-0.6px;color:#000;">8</div><div style="position:absolute;left:380.5px;top:343.66px;width:20px;text-align:center;font-family:'Liberation Sans', sans-serif;font-size:9.5px;line-height:9.5px;letter-spacing:-0.6px;color:#000;">9</div><div style="position:absolute;left:392.5px;top:343.66px;width:20px;text-align:center;font-family:'Liberation Sans', sans-serif;font-size:9.5px;line-height:9.5px;letter-spacing:-0.6px;color:#000;">10</div><div style="position:absolute;left:404.5px;top:343.66px;width:20px;text-align:center;font-family:'Liberation Sans', sans-serif;font-size:9.5px;line-height:9.5px;letter-spacing:-0.6px;color:#000;">11</div><div style="position:absolute;left:416.5px;top:343.66px;width:20px;text-align:center;font-family:'Liberation Sans', sans-serif;font-size:9.5px;line-height:9.5px;letter-spacing:-0.6px;color:#000;">12</div><div style="position:absolute;left:428.5px;top:343.66px;width:20px;text-align:center;font-family:'Liberation Sans', sans-serif;font-size:9.5px;line-height:9.5px;letter-spacing:-0.6px;color:#000;">13</div><div style="position:absolute;left:440.5px;top:343.66px;width:20px;text-align:center;font-family:'Liberation Sans', sans-serif;font-size:9.5px;line-height:9.5px;letter-spacing:-0.6px;color:#000;">14</div><div style="position:absolute;left:452.5px;top:343.66px;width:20px;text-align:center;font-family:'Liberation Sans', sans-serif;font-size:9.5px;line-height:9.5px;letter-spacing:-0.6px;color:#000;">15</div>
<div style="position:absolute;left:267.00px;top:356.38px;font-family:'Liberation Sans', sans-serif;font-size:9px;line-height:9px;font-weight:400;color:#000;letter-spacing:0.000px;white-space:pre;"><span>A</span></div>
<div style="position:absolute;left:267.00px;top:368.38px;font-family:'Liberation Sans', sans-serif;font-size:9px;line-height:9px;font-weight:400;color:#000;letter-spacing:0.000px;white-space:pre;"><span>B</span></div>
<div style="position:absolute;left:279px;top:357px;width:7px;height:7px;box-sizing:border-box;border:1px solid #000;"></div><div style="position:absolute;left:291px;top:357px;width:7px;height:7px;box-sizing:border-box;border:1px solid #000;"></div><div style="position:absolute;left:303px;top:357px;width:7px;height:7px;box-sizing:border-box;border:1px solid #000;"></div><div style="position:absolute;left:315px;top:357px;width:7px;height:7px;box-sizing:border-box;border:1px solid #000;"></div><div style="position:absolute;left:327px;top:357px;width:7px;height:7px;box-sizing:border-box;border:1px solid #000;"></div><div style="position:absolute;left:339px;top:357px;width:7px;height:7px;box-sizing:border-box;border:1px solid #000;"></div><div style="position:absolute;left:351px;top:357px;width:7px;height:7px;box-sizing:border-box;border:1px solid #000;"></div><div style="position:absolute;left:363px;top:357px;width:7px;height:7px;box-sizing:border-box;border:1px solid #000;"></div><div style="position:absolute;left:375px;top:357px;width:7px;height:7px;box-sizing:border-box;border:1px solid #000;"></div><div style="position:absolute;left:387px;top:357px;width:7px;height:7px;box-sizing:border-box;border:1px solid #000;"></div><div style="position:absolute;left:399px;top:357px;width:7px;height:7px;box-sizing:border-box;border:1px solid #000;"></div><div style="position:absolute;left:411px;top:357px;width:7px;height:7px;box-sizing:border-box;border:1px solid #000;"></div><div style="position:absolute;left:423px;top:357px;width:7px;height:7px;box-sizing:border-box;border:1px solid #000;"></div><div style="position:absolute;left:435px;top:357px;width:7px;height:7px;box-sizing:border-box;border:1px solid #000;"></div><div style="position:absolute;left:447px;top:357px;width:7px;height:7px;box-sizing:border-box;border:1px solid #000;"></div><div style="position:absolute;left:459px;top:357px;width:7px;height:7px;box-sizing:border-box;border:1px solid #000;"></div><div style="position:absolute;left:279px;top:369px;width:7px;height:7px;box-sizing:border-box;border:1px solid #000;"></div><div style="position:absolute;left:291px;top:369px;width:7px;height:7px;box-sizing:border-box;border:1px solid #000;"></div><div style="position:absolute;left:303px;top:369px;width:7px;height:7px;box-sizing:border-box;border:1px solid #000;"></div><div style="position:absolute;left:315px;top:369px;width:7px;height:7px;box-sizing:border-box;border:1px solid #000;"></div><div style="position:absolute;left:327px;top:369px;width:7px;height:7px;box-sizing:border-box;border:1px solid #000;"></div><div style="position:absolute;left:339px;top:369px;width:7px;height:7px;box-sizing:border-box;border:1px solid #000;"></div><div style="position:absolute;left:351px;top:369px;width:7px;height:7px;box-sizing:border-box;border:1px solid #000;"></div><div style="position:absolute;left:363px;top:369px;width:7px;height:7px;box-sizing:border-box;border:1px solid #000;"></div><div style="position:absolute;left:375px;top:369px;width:7px;height:7px;box-sizing:border-box;border:1px solid #000;"></div><div style="position:absolute;left:387px;top:369px;width:7px;height:7px;box-sizing:border-box;border:1px solid #000;"></div><div style="position:absolute;left:399px;top:369px;width:7px;height:7px;box-sizing:border-box;border:1px solid #000;"></div><div style="position:absolute;left:411px;top:369px;width:7px;height:7px;box-sizing:border-box;border:1px solid #000;"></div><div style="position:absolute;left:423px;top:369px;width:7px;height:7px;box-sizing:border-box;border:1px solid #000;"></div><div style="position:absolute;left:435px;top:369px;width:7px;height:7px;box-sizing:border-box;border:1px solid #000;"></div><div style="position:absolute;left:447px;top:369px;width:7px;height:7px;box-sizing:border-box;border:1px solid #000;"></div><div style="position:absolute;left:459px;top:369px;width:7px;height:7px;box-sizing:border-box;border:1px solid #000;"></div>
<div style="position:absolute;left:482px;top:259px;width:218px;height:126px;box-sizing:border-box;border:1px solid #3d84c8;border-radius:4px;"></div>
<div style="position:absolute;left:493px;top:257px;width:102.0px;height:5px;background:#fff;"></div>
<div style="position:absolute;left:496.21px;top:249.65px;font-family:'Liberation Sans', sans-serif;font-size:14px;line-height:14px;font-weight:400;color:#1414f8;letter-spacing:-0.102px;white-space:pre;"><span id="t54">Ch.2 - Disabled</span></div>
<div style="position:absolute;left:489.14px;top:268.75px;font-family:'Liberation Sans', sans-serif;font-size:14px;line-height:14px;font-weight:400;color:#000;letter-spacing:-0.986px;white-space:pre;"><span>RF:</span></div>
<div style="position:absolute;left:526.90px;top:268.75px;font-family:'Liberation Sans', sans-serif;font-size:14px;line-height:14px;font-weight:400;color:#000;letter-spacing:0.000px;white-space:pre;"><span>-</span></div>
<div style="position:absolute;left:573.39px;top:268.75px;font-family:'Liberation Sans', sans-serif;font-size:14px;line-height:14px;font-weight:400;color:#000;letter-spacing:-0.745px;white-space:pre;"><span>MPX:</span></div>
<div style="position:absolute;left:619.80px;top:268.75px;font-family:'Liberation Sans', sans-serif;font-size:14px;line-height:14px;font-weight:400;color:#000;letter-spacing:0.000px;white-space:pre;"><span>-</span></div>
<div style="position:absolute;left:489.14px;top:287.85px;font-family:'Liberation Sans', sans-serif;font-size:14px;line-height:14px;font-weight:400;color:#000;letter-spacing:0.300px;white-space:pre;"><span>Left:</span></div>
<div style="position:absolute;left:526.90px;top:287.85px;font-family:'Liberation Sans', sans-serif;font-size:14px;line-height:14px;font-weight:400;color:#000;letter-spacing:0.000px;white-space:pre;"><span>-</span></div>
<div style="position:absolute;left:573.39px;top:287.85px;font-family:'Liberation Sans', sans-serif;font-size:14px;line-height:14px;font-weight:400;color:#000;letter-spacing:0.173px;white-space:pre;"><span>Right:</span></div>
<div style="position:absolute;left:619.80px;top:287.85px;font-family:'Liberation Sans', sans-serif;font-size:14px;line-height:14px;font-weight:400;color:#000;letter-spacing:0.000px;white-space:pre;"><span>-</span></div>
<div style="position:absolute;left:489.14px;top:306.75px;font-family:'Liberation Sans', sans-serif;font-size:14px;line-height:14px;font-weight:400;color:#000;letter-spacing:0.124px;white-space:pre;"><span>Pilot:</span></div>
<div style="position:absolute;left:526.90px;top:306.75px;font-family:'Liberation Sans', sans-serif;font-size:14px;line-height:14px;font-weight:400;color:#000;letter-spacing:0.000px;white-space:pre;"><span>-</span></div>
<div style="position:absolute;left:573.39px;top:306.75px;font-family:'Liberation Sans', sans-serif;font-size:14px;line-height:14px;font-weight:400;color:#000;letter-spacing:-0.706px;white-space:pre;"><span>RDS:</span></div>
<div style="position:absolute;left:619.80px;top:306.75px;font-family:'Liberation Sans', sans-serif;font-size:14px;line-height:14px;font-weight:400;color:#000;letter-spacing:0.000px;white-space:pre;"><span>-</span></div>
<div style="position:absolute;left:525.72px;top:325.85px;font-family:'Liberation Sans', sans-serif;font-size:14px;line-height:14px;font-weight:400;color:#000;letter-spacing:-0.372px;white-space:pre;"><span>MPX Power:</span></div>
<div style="position:absolute;left:619.80px;top:325.85px;font-family:'Liberation Sans', sans-serif;font-size:14px;line-height:14px;font-weight:400;color:#000;letter-spacing:0.000px;white-space:pre;"><span>-</span></div>
<div style="position:absolute;left:497.5px;top:343.66px;width:20px;text-align:center;font-family:'Liberation Sans', sans-serif;font-size:9.5px;line-height:9.5px;letter-spacing:-0.6px;color:#000;">0</div><div style="position:absolute;left:509.5px;top:343.66px;width:20px;text-align:center;font-family:'Liberation Sans', sans-serif;font-size:9.5px;line-height:9.5px;letter-spacing:-0.6px;color:#000;">1</div><div style="position:absolute;left:521.5px;top:343.66px;width:20px;text-align:center;font-family:'Liberation Sans', sans-serif;font-size:9.5px;line-height:9.5px;letter-spacing:-0.6px;color:#000;">2</div><div style="position:absolute;left:533.5px;top:343.66px;width:20px;text-align:center;font-family:'Liberation Sans', sans-serif;font-size:9.5px;line-height:9.5px;letter-spacing:-0.6px;color:#000;">3</div><div style="position:absolute;left:545.5px;top:343.66px;width:20px;text-align:center;font-family:'Liberation Sans', sans-serif;font-size:9.5px;line-height:9.5px;letter-spacing:-0.6px;color:#000;">4</div><div style="position:absolute;left:557.5px;top:343.66px;width:20px;text-align:center;font-family:'Liberation Sans', sans-serif;font-size:9.5px;line-height:9.5px;letter-spacing:-0.6px;color:#000;">5</div><div style="position:absolute;left:569.5px;top:343.66px;width:20px;text-align:center;font-family:'Liberation Sans', sans-serif;font-size:9.5px;line-height:9.5px;letter-spacing:-0.6px;color:#000;">6</div><div style="position:absolute;left:581.5px;top:343.66px;width:20px;text-align:center;font-family:'Liberation Sans', sans-serif;font-size:9.5px;line-height:9.5px;letter-spacing:-0.6px;color:#000;">7</div><div style="position:absolute;left:593.5px;top:343.66px;width:20px;text-align:center;font-family:'Liberation Sans', sans-serif;font-size:9.5px;line-height:9.5px;letter-spacing:-0.6px;color:#000;">8</div><div style="position:absolute;left:605.5px;top:343.66px;width:20px;text-align:center;font-family:'Liberation Sans', sans-serif;font-size:9.5px;line-height:9.5px;letter-spacing:-0.6px;color:#000;">9</div><div style="position:absolute;left:617.5px;top:343.66px;width:20px;text-align:center;font-family:'Liberation Sans', sans-serif;font-size:9.5px;line-height:9.5px;letter-spacing:-0.6px;color:#000;">10</div><div style="position:absolute;left:629.5px;top:343.66px;width:20px;text-align:center;font-family:'Liberation Sans', sans-serif;font-size:9.5px;line-height:9.5px;letter-spacing:-0.6px;color:#000;">11</div><div style="position:absolute;left:641.5px;top:343.66px;width:20px;text-align:center;font-family:'Liberation Sans', sans-serif;font-size:9.5px;line-height:9.5px;letter-spacing:-0.6px;color:#000;">12</div><div style="position:absolute;left:653.5px;top:343.66px;width:20px;text-align:center;font-family:'Liberation Sans', sans-serif;font-size:9.5px;line-height:9.5px;letter-spacing:-0.6px;color:#000;">13</div><div style="position:absolute;left:665.5px;top:343.66px;width:20px;text-align:center;font-family:'Liberation Sans', sans-serif;font-size:9.5px;line-height:9.5px;letter-spacing:-0.6px;color:#000;">14</div><div style="position:absolute;left:677.5px;top:343.66px;width:20px;text-align:center;font-family:'Liberation Sans', sans-serif;font-size:9.5px;line-height:9.5px;letter-spacing:-0.6px;color:#000;">15</div>
<div style="position:absolute;left:492.00px;top:356.38px;font-family:'Liberation Sans', sans-serif;font-size:9px;line-height:9px;font-weight:400;color:#000;letter-spacing:0.000px;white-space:pre;"><span>A</span></div>
<div style="position:absolute;left:492.00px;top:368.38px;font-family:'Liberation Sans', sans-serif;font-size:9px;line-height:9px;font-weight:400;color:#000;letter-spacing:0.000px;white-space:pre;"><span>B</span></div>
<div style="position:absolute;left:504px;top:357px;width:7px;height:7px;box-sizing:border-box;border:1px solid #000;"></div><div style="position:absolute;left:516px;top:357px;width:7px;height:7px;box-sizing:border-box;border:1px solid #000;"></div><div style="position:absolute;left:528px;top:357px;width:7px;height:7px;box-sizing:border-box;border:1px solid #000;"></div><div style="position:absolute;left:540px;top:357px;width:7px;height:7px;box-sizing:border-box;border:1px solid #000;"></div><div style="position:absolute;left:552px;top:357px;width:7px;height:7px;box-sizing:border-box;border:1px solid #000;"></div><div style="position:absolute;left:564px;top:357px;width:7px;height:7px;box-sizing:border-box;border:1px solid #000;"></div><div style="position:absolute;left:576px;top:357px;width:7px;height:7px;box-sizing:border-box;border:1px solid #000;"></div><div style="position:absolute;left:588px;top:357px;width:7px;height:7px;box-sizing:border-box;border:1px solid #000;"></div><div style="position:absolute;left:600px;top:357px;width:7px;height:7px;box-sizing:border-box;border:1px solid #000;"></div><div style="position:absolute;left:612px;top:357px;width:7px;height:7px;box-sizing:border-box;border:1px solid #000;"></div><div style="position:absolute;left:624px;top:357px;width:7px;height:7px;box-sizing:border-box;border:1px solid #000;"></div><div style="position:absolute;left:636px;top:357px;width:7px;height:7px;box-sizing:border-box;border:1px solid #000;"></div><div style="position:absolute;left:648px;top:357px;width:7px;height:7px;box-sizing:border-box;border:1px solid #000;"></div><div style="position:absolute;left:660px;top:357px;width:7px;height:7px;box-sizing:border-box;border:1px solid #000;"></div><div style="position:absolute;left:672px;top:357px;width:7px;height:7px;box-sizing:border-box;border:1px solid #000;"></div><div style="position:absolute;left:684px;top:357px;width:7px;height:7px;box-sizing:border-box;border:1px solid #000;"></div><div style="position:absolute;left:504px;top:369px;width:7px;height:7px;box-sizing:border-box;border:1px solid #000;"></div><div style="position:absolute;left:516px;top:369px;width:7px;height:7px;box-sizing:border-box;border:1px solid #000;"></div><div style="position:absolute;left:528px;top:369px;width:7px;height:7px;box-sizing:border-box;border:1px solid #000;"></div><div style="position:absolute;left:540px;top:369px;width:7px;height:7px;box-sizing:border-box;border:1px solid #000;"></div><div style="position:absolute;left:552px;top:369px;width:7px;height:7px;box-sizing:border-box;border:1px solid #000;"></div><div style="position:absolute;left:564px;top:369px;width:7px;height:7px;box-sizing:border-box;border:1px solid #000;"></div><div style="position:absolute;left:576px;top:369px;width:7px;height:7px;box-sizing:border-box;border:1px solid #000;"></div><div style="position:absolute;left:588px;top:369px;width:7px;height:7px;box-sizing:border-box;border:1px solid #000;"></div><div style="position:absolute;left:600px;top:369px;width:7px;height:7px;box-sizing:border-box;border:1px solid #000;"></div><div style="position:absolute;left:612px;top:369px;width:7px;height:7px;box-sizing:border-box;border:1px solid #000;"></div><div style="position:absolute;left:624px;top:369px;width:7px;height:7px;box-sizing:border-box;border:1px solid #000;"></div><div style="position:absolute;left:636px;top:369px;width:7px;height:7px;box-sizing:border-box;border:1px solid #000;"></div><div style="position:absolute;left:648px;top:369px;width:7px;height:7px;box-sizing:border-box;border:1px solid #000;"></div><div style="position:absolute;left:660px;top:369px;width:7px;height:7px;box-sizing:border-box;border:1px solid #000;"></div><div style="position:absolute;left:672px;top:369px;width:7px;height:7px;box-sizing:border-box;border:1px solid #000;"></div><div style="position:absolute;left:684px;top:369px;width:7px;height:7px;box-sizing:border-box;border:1px solid #000;"></div>
<div style="position:absolute;left:707px;top:259px;width:218px;height:126px;box-sizing:border-box;border:1px solid #3d84c8;border-radius:4px;"></div>
<div style="position:absolute;left:718px;top:257px;width:102.0px;height:5px;background:#fff;"></div>
<div style="position:absolute;left:721.21px;top:249.65px;font-family:'Liberation Sans', sans-serif;font-size:14px;line-height:14px;font-weight:400;color:#1414f8;letter-spacing:-0.102px;white-space:pre;"><span>Ch.3 - Disabled</span></div>
<div style="position:absolute;left:714.14px;top:268.75px;font-family:'Liberation Sans', sans-serif;font-size:14px;line-height:14px;font-weight:400;color:#000;letter-spacing:-0.986px;white-space:pre;"><span>RF:</span></div>
<div style="position:absolute;left:751.90px;top:268.75px;font-family:'Liberation Sans', sans-serif;font-size:14px;line-height:14px;font-weight:400;color:#000;letter-spacing:0.000px;white-space:pre;"><span>-</span></div>
<div style="position:absolute;left:798.39px;top:268.75px;font-family:'Liberation Sans', sans-serif;font-size:14px;line-height:14px;font-weight:400;color:#000;letter-spacing:-0.745px;white-space:pre;"><span>MPX:</span></div>
<div style="position:absolute;left:844.80px;top:268.75px;font-family:'Liberation Sans', sans-serif;font-size:14px;line-height:14px;font-weight:400;color:#000;letter-spacing:0.000px;white-space:pre;"><span>-</span></div>
<div style="position:absolute;left:714.14px;top:287.85px;font-family:'Liberation Sans', sans-serif;font-size:14px;line-height:14px;font-weight:400;color:#000;letter-spacing:0.300px;white-space:pre;"><span>Left:</span></div>
<div style="position:absolute;left:751.90px;top:287.85px;font-family:'Liberation Sans', sans-serif;font-size:14px;line-height:14px;font-weight:400;color:#000;letter-spacing:0.000px;white-space:pre;"><span>-</span></div>
<div style="position:absolute;left:798.39px;top:287.85px;font-family:'Liberation Sans', sans-serif;font-size:14px;line-height:14px;font-weight:400;color:#000;letter-spacing:0.173px;white-space:pre;"><span>Right:</span></div>
<div style="position:absolute;left:844.80px;top:287.85px;font-family:'Liberation Sans', sans-serif;font-size:14px;line-height:14px;font-weight:400;color:#000;letter-spacing:0.000px;white-space:pre;"><span>-</span></div>
<div style="position:absolute;left:714.14px;top:306.75px;font-family:'Liberation Sans', sans-serif;font-size:14px;line-height:14px;font-weight:400;color:#000;letter-spacing:0.124px;white-space:pre;"><span>Pilot:</span></div>
<div style="position:absolute;left:751.90px;top:306.75px;font-family:'Liberation Sans', sans-serif;font-size:14px;line-height:14px;font-weight:400;color:#000;letter-spacing:0.000px;white-space:pre;"><span>-</span></div>
<div style="position:absolute;left:798.39px;top:306.75px;font-family:'Liberation Sans', sans-serif;font-size:14px;line-height:14px;font-weight:400;color:#000;letter-spacing:-0.706px;white-space:pre;"><span>RDS:</span></div>
<div style="position:absolute;left:844.80px;top:306.75px;font-family:'Liberation Sans', sans-serif;font-size:14px;line-height:14px;font-weight:400;color:#000;letter-spacing:0.000px;white-space:pre;"><span>-</span></div>
<div style="position:absolute;left:750.72px;top:325.85px;font-family:'Liberation Sans', sans-serif;font-size:14px;line-height:14px;font-weight:400;color:#000;letter-spacing:-0.372px;white-space:pre;"><span>MPX Power:</span></div>
<div style="position:absolute;left:844.80px;top:325.85px;font-family:'Liberation Sans', sans-serif;font-size:14px;line-height:14px;font-weight:400;color:#000;letter-spacing:0.000px;white-space:pre;"><span>-</span></div>
<div style="position:absolute;left:722.5px;top:343.66px;width:20px;text-align:center;font-family:'Liberation Sans', sans-serif;font-size:9.5px;line-height:9.5px;letter-spacing:-0.6px;color:#000;">0</div><div style="position:absolute;left:734.5px;top:343.66px;width:20px;text-align:center;font-family:'Liberation Sans', sans-serif;font-size:9.5px;line-height:9.5px;letter-spacing:-0.6px;color:#000;">1</div><div style="position:absolute;left:746.5px;top:343.66px;width:20px;text-align:center;font-family:'Liberation Sans', sans-serif;font-size:9.5px;line-height:9.5px;letter-spacing:-0.6px;color:#000;">2</div><div style="position:absolute;left:758.5px;top:343.66px;width:20px;text-align:center;font-family:'Liberation Sans', sans-serif;font-size:9.5px;line-height:9.5px;letter-spacing:-0.6px;color:#000;">3</div><div style="position:absolute;left:770.5px;top:343.66px;width:20px;text-align:center;font-family:'Liberation Sans', sans-serif;font-size:9.5px;line-height:9.5px;letter-spacing:-0.6px;color:#000;">4</div><div style="position:absolute;left:782.5px;top:343.66px;width:20px;text-align:center;font-family:'Liberation Sans', sans-serif;font-size:9.5px;line-height:9.5px;letter-spacing:-0.6px;color:#000;">5</div><div style="position:absolute;left:794.5px;top:343.66px;width:20px;text-align:center;font-family:'Liberation Sans', sans-serif;font-size:9.5px;line-height:9.5px;letter-spacing:-0.6px;color:#000;">6</div><div style="position:absolute;left:806.5px;top:343.66px;width:20px;text-align:center;font-family:'Liberation Sans', sans-serif;font-size:9.5px;line-height:9.5px;letter-spacing:-0.6px;color:#000;">7</div><div style="position:absolute;left:818.5px;top:343.66px;width:20px;text-align:center;font-family:'Liberation Sans', sans-serif;font-size:9.5px;line-height:9.5px;letter-spacing:-0.6px;color:#000;">8</div><div style="position:absolute;left:830.5px;top:343.66px;width:20px;text-align:center;font-family:'Liberation Sans', sans-serif;font-size:9.5px;line-height:9.5px;letter-spacing:-0.6px;color:#000;">9</div><div style="position:absolute;left:842.5px;top:343.66px;width:20px;text-align:center;font-family:'Liberation Sans', sans-serif;font-size:9.5px;line-height:9.5px;letter-spacing:-0.6px;color:#000;">10</div><div style="position:absolute;left:854.5px;top:343.66px;width:20px;text-align:center;font-family:'Liberation Sans', sans-serif;font-size:9.5px;line-height:9.5px;letter-spacing:-0.6px;color:#000;">11</div><div style="position:absolute;left:866.5px;top:343.66px;width:20px;text-align:center;font-family:'Liberation Sans', sans-serif;font-size:9.5px;line-height:9.5px;letter-spacing:-0.6px;color:#000;">12</div><div style="position:absolute;left:878.5px;top:343.66px;width:20px;text-align:center;font-family:'Liberation Sans', sans-serif;font-size:9.5px;line-height:9.5px;letter-spacing:-0.6px;color:#000;">13</div><div style="position:absolute;left:890.5px;top:343.66px;width:20px;text-align:center;font-family:'Liberation Sans', sans-serif;font-size:9.5px;line-height:9.5px;letter-spacing:-0.6px;color:#000;">14</div><div style="position:absolute;left:902.5px;top:343.66px;width:20px;text-align:center;font-family:'Liberation Sans', sans-serif;font-size:9.5px;line-height:9.5px;letter-spacing:-0.6px;color:#000;">15</div>
<div style="position:absolute;left:717.00px;top:356.38px;font-family:'Liberation Sans', sans-serif;font-size:9px;line-height:9px;font-weight:400;color:#000;letter-spacing:0.000px;white-space:pre;"><span>A</span></div>
<div style="position:absolute;left:717.00px;top:368.38px;font-family:'Liberation Sans', sans-serif;font-size:9px;line-height:9px;font-weight:400;color:#000;letter-spacing:0.000px;white-space:pre;"><span>B</span></div>
<div style="position:absolute;left:729px;top:357px;width:7px;height:7px;box-sizing:border-box;border:1px solid #000;"></div><div style="position:absolute;left:741px;top:357px;width:7px;height:7px;box-sizing:border-box;border:1px solid #000;"></div><div style="position:absolute;left:753px;top:357px;width:7px;height:7px;box-sizing:border-box;border:1px solid #000;"></div><div style="position:absolute;left:765px;top:357px;width:7px;height:7px;box-sizing:border-box;border:1px solid #000;"></div><div style="position:absolute;left:777px;top:357px;width:7px;height:7px;box-sizing:border-box;border:1px solid #000;"></div><div style="position:absolute;left:789px;top:357px;width:7px;height:7px;box-sizing:border-box;border:1px solid #000;"></div><div style="position:absolute;left:801px;top:357px;width:7px;height:7px;box-sizing:border-box;border:1px solid #000;"></div><div style="position:absolute;left:813px;top:357px;width:7px;height:7px;box-sizing:border-box;border:1px solid #000;"></div><div style="position:absolute;left:825px;top:357px;width:7px;height:7px;box-sizing:border-box;border:1px solid #000;"></div><div style="position:absolute;left:837px;top:357px;width:7px;height:7px;box-sizing:border-box;border:1px solid #000;"></div><div style="position:absolute;left:849px;top:357px;width:7px;height:7px;box-sizing:border-box;border:1px solid #000;"></div><div style="position:absolute;left:861px;top:357px;width:7px;height:7px;box-sizing:border-box;border:1px solid #000;"></div><div style="position:absolute;left:873px;top:357px;width:7px;height:7px;box-sizing:border-box;border:1px solid #000;"></div><div style="position:absolute;left:885px;top:357px;width:7px;height:7px;box-sizing:border-box;border:1px solid #000;"></div><div style="position:absolute;left:897px;top:357px;width:7px;height:7px;box-sizing:border-box;border:1px solid #000;"></div><div style="position:absolute;left:909px;top:357px;width:7px;height:7px;box-sizing:border-box;border:1px solid #000;"></div><div style="position:absolute;left:729px;top:369px;width:7px;height:7px;box-sizing:border-box;border:1px solid #000;"></div><div style="position:absolute;left:741px;top:369px;width:7px;height:7px;box-sizing:border-box;border:1px solid #000;"></div><div style="position:absolute;left:753px;top:369px;width:7px;height:7px;box-sizing:border-box;border:1px solid #000;"></div><div style="position:absolute;left:765px;top:369px;width:7px;height:7px;box-sizing:border-box;border:1px solid #000;"></div><div style="position:absolute;left:777px;top:369px;width:7px;height:7px;box-sizing:border-box;border:1px solid #000;"></div><div style="position:absolute;left:789px;top:369px;width:7px;height:7px;box-sizing:border-box;border:1px solid #000;"></div><div style="position:absolute;left:801px;top:369px;width:7px;height:7px;box-sizing:border-box;border:1px solid #000;"></div><div style="position:absolute;left:813px;top:369px;width:7px;height:7px;box-sizing:border-box;border:1px solid #000;"></div><div style="position:absolute;left:825px;top:369px;width:7px;height:7px;box-sizing:border-box;border:1px solid #000;"></div><div style="position:absolute;left:837px;top:369px;width:7px;height:7px;box-sizing:border-box;border:1px solid #000;"></div><div style="position:absolute;left:849px;top:369px;width:7px;height:7px;box-sizing:border-box;border:1px solid #000;"></div><div style="position:absolute;left:861px;top:369px;width:7px;height:7px;box-sizing:border-box;border:1px solid #000;"></div><div style="position:absolute;left:873px;top:369px;width:7px;height:7px;box-sizing:border-box;border:1px solid #000;"></div><div style="position:absolute;left:885px;top:369px;width:7px;height:7px;box-sizing:border-box;border:1px solid #000;"></div><div style="position:absolute;left:897px;top:369px;width:7px;height:7px;box-sizing:border-box;border:1px solid #000;"></div><div style="position:absolute;left:909px;top:369px;width:7px;height:7px;box-sizing:border-box;border:1px solid #000;"></div>
<div style="position:absolute;left:257px;top:401px;width:218px;height:126px;box-sizing:border-box;border:1px solid #3d84c8;border-radius:4px;"></div>
<div style="position:absolute;left:268px;top:399px;width:102.0px;height:5px;background:#fff;"></div>
<div style="position:absolute;left:271.21px;top:391.65px;font-family:'Liberation Sans', sans-serif;font-size:14px;line-height:14px;font-weight:400;color:#1414f8;letter-spacing:-0.102px;white-space:pre;"><span>Ch.4 - Disabled</span></div>
<div style="position:absolute;left:264.14px;top:410.75px;font-family:'Liberation Sans', sans-serif;font-size:14px;line-height:14px;font-weight:400;color:#000;letter-spacing:-0.986px;white-space:pre;"><span>RF:</span></div>
<div style="position:absolute;left:301.90px;top:410.75px;font-family:'Liberation Sans', sans-serif;font-size:14px;line-height:14px;font-weight:400;color:#000;letter-spacing:0.000px;white-space:pre;"><span>-</span></div>
<div style="position:absolute;left:348.39px;top:410.75px;font-family:'Liberation Sans', sans-serif;font-size:14px;line-height:14px;font-weight:400;color:#000;letter-spacing:-0.745px;white-space:pre;"><span>MPX:</span></div>
<div style="position:absolute;left:394.80px;top:410.75px;font-family:'Liberation Sans', sans-serif;font-size:14px;line-height:14px;font-weight:400;color:#000;letter-spacing:0.000px;white-space:pre;"><span>-</span></div>
<div style="position:absolute;left:264.14px;top:429.85px;font-family:'Liberation Sans', sans-serif;font-size:14px;line-height:14px;font-weight:400;color:#000;letter-spacing:0.300px;white-space:pre;"><span>Left:</span></div>
<div style="position:absolute;left:301.90px;top:429.85px;font-family:'Liberation Sans', sans-serif;font-size:14px;line-height:14px;font-weight:400;color:#000;letter-spacing:0.000px;white-space:pre;"><span>-</span></div>
<div style="position:absolute;left:348.39px;top:429.85px;font-family:'Liberation Sans', sans-serif;font-size:14px;line-height:14px;font-weight:400;color:#000;letter-spacing:0.173px;white-space:pre;"><span>Right:</span></div>
<div style="position:absolute;left:394.80px;top:429.85px;font-family:'Liberation Sans', sans-serif;font-size:14px;line-height:14px;font-weight:400;color:#000;letter-spacing:0.000px;white-space:pre;"><span>-</span></div>
<div style="position:absolute;left:264.14px;top:448.75px;font-family:'Liberation Sans', sans-serif;font-size:14px;line-height:14px;font-weight:400;color:#000;letter-spacing:0.124px;white-space:pre;"><span>Pilot:</span></div>
<div style="position:absolute;left:301.90px;top:448.75px;font-family:'Liberation Sans', sans-serif;font-size:14px;line-height:14px;font-weight:400;color:#000;letter-spacing:0.000px;white-space:pre;"><span>-</span></div>
<div style="position:absolute;left:348.39px;top:448.75px;font-family:'Liberation Sans', sans-serif;font-size:14px;line-height:14px;font-weight:400;color:#000;letter-spacing:-0.706px;white-space:pre;"><span>RDS:</span></div>
<div style="position:absolute;left:394.80px;top:448.75px;font-family:'Liberation Sans', sans-serif;font-size:14px;line-height:14px;font-weight:400;color:#000;letter-spacing:0.000px;white-space:pre;"><span>-</span></div>
<div style="position:absolute;left:300.72px;top:467.85px;font-family:'Liberation Sans', sans-serif;font-size:14px;line-height:14px;font-weight:400;color:#000;letter-spacing:-0.372px;white-space:pre;"><span>MPX Power:</span></div>
<div style="position:absolute;left:394.80px;top:467.85px;font-family:'Liberation Sans', sans-serif;font-size:14px;line-height:14px;font-weight:400;color:#000;letter-spacing:0.000px;white-space:pre;"><span>-</span></div>
<div style="position:absolute;left:272.5px;top:485.66px;width:20px;text-align:center;font-family:'Liberation Sans', sans-serif;font-size:9.5px;line-height:9.5px;letter-spacing:-0.6px;color:#000;">0</div><div style="position:absolute;left:284.5px;top:485.66px;width:20px;text-align:center;font-family:'Liberation Sans', sans-serif;font-size:9.5px;line-height:9.5px;letter-spacing:-0.6px;color:#000;">1</div><div style="position:absolute;left:296.5px;top:485.66px;width:20px;text-align:center;font-family:'Liberation Sans', sans-serif;font-size:9.5px;line-height:9.5px;letter-spacing:-0.6px;color:#000;">2</div><div style="position:absolute;left:308.5px;top:485.66px;width:20px;text-align:center;font-family:'Liberation Sans', sans-serif;font-size:9.5px;line-height:9.5px;letter-spacing:-0.6px;color:#000;">3</div><div style="position:absolute;left:320.5px;top:485.66px;width:20px;text-align:center;font-family:'Liberation Sans', sans-serif;font-size:9.5px;line-height:9.5px;letter-spacing:-0.6px;color:#000;">4</div><div style="position:absolute;left:332.5px;top:485.66px;width:20px;text-align:center;font-family:'Liberation Sans', sans-serif;font-size:9.5px;line-height:9.5px;letter-spacing:-0.6px;color:#000;">5</div><div style="position:absolute;left:344.5px;top:485.66px;width:20px;text-align:center;font-family:'Liberation Sans', sans-serif;font-size:9.5px;line-height:9.5px;letter-spacing:-0.6px;color:#000;">6</div><div style="position:absolute;left:356.5px;top:485.66px;width:20px;text-align:center;font-family:'Liberation Sans', sans-serif;font-size:9.5px;line-height:9.5px;letter-spacing:-0.6px;color:#000;">7</div><div style="position:absolute;left:368.5px;top:485.66px;width:20px;text-align:center;font-family:'Liberation Sans', sans-serif;font-size:9.5px;line-height:9.5px;letter-spacing:-0.6px;color:#000;">8</div><div style="position:absolute;left:380.5px;top:485.66px;width:20px;text-align:center;font-family:'Liberation Sans', sans-serif;font-size:9.5px;line-height:9.5px;letter-spacing:-0.6px;color:#000;">9</div><div style="position:absolute;left:392.5px;top:485.66px;width:20px;text-align:center;font-family:'Liberation Sans', sans-serif;font-size:9.5px;line-height:9.5px;letter-spacing:-0.6px;color:#000;">10</div><div style="position:absolute;left:404.5px;top:485.66px;width:20px;text-align:center;font-family:'Liberation Sans', sans-serif;font-size:9.5px;line-height:9.5px;letter-spacing:-0.6px;color:#000;">11</div><div style="position:absolute;left:416.5px;top:485.66px;width:20px;text-align:center;font-family:'Liberation Sans', sans-serif;font-size:9.5px;line-height:9.5px;letter-spacing:-0.6px;color:#000;">12</div><div style="position:absolute;left:428.5px;top:485.66px;width:20px;text-align:center;font-family:'Liberation Sans', sans-serif;font-size:9.5px;line-height:9.5px;letter-spacing:-0.6px;color:#000;">13</div><div style="position:absolute;left:440.5px;top:485.66px;width:20px;text-align:center;font-family:'Liberation Sans', sans-serif;font-size:9.5px;line-height:9.5px;letter-spacing:-0.6px;color:#000;">14</div><div style="position:absolute;left:452.5px;top:485.66px;width:20px;text-align:center;font-family:'Liberation Sans', sans-serif;font-size:9.5px;line-height:9.5px;letter-spacing:-0.6px;color:#000;">15</div>
<div style="position:absolute;left:267.00px;top:498.38px;font-family:'Liberation Sans', sans-serif;font-size:9px;line-height:9px;font-weight:400;color:#000;letter-spacing:0.000px;white-space:pre;"><span>A</span></div>
<div style="position:absolute;left:267.00px;top:510.38px;font-family:'Liberation Sans', sans-serif;font-size:9px;line-height:9px;font-weight:400;color:#000;letter-spacing:0.000px;white-space:pre;"><span>B</span></div>
<div style="position:absolute;left:279px;top:499px;width:7px;height:7px;box-sizing:border-box;border:1px solid #000;"></div><div style="position:absolute;left:291px;top:499px;width:7px;height:7px;box-sizing:border-box;border:1px solid #000;"></div><div style="position:absolute;left:303px;top:499px;width:7px;height:7px;box-sizing:border-box;border:1px solid #000;"></div><div style="position:absolute;left:315px;top:499px;width:7px;height:7px;box-sizing:border-box;border:1px solid #000;"></div><div style="position:absolute;left:327px;top:499px;width:7px;height:7px;box-sizing:border-box;border:1px solid #000;"></div><div style="position:absolute;left:339px;top:499px;width:7px;height:7px;box-sizing:border-box;border:1px solid #000;"></div><div style="position:absolute;left:351px;top:499px;width:7px;height:7px;box-sizing:border-box;border:1px solid #000;"></div><div style="position:absolute;left:363px;top:499px;width:7px;height:7px;box-sizing:border-box;border:1px solid #000;"></div><div style="position:absolute;left:375px;top:499px;width:7px;height:7px;box-sizing:border-box;border:1px solid #000;"></div><div style="position:absolute;left:387px;top:499px;width:7px;height:7px;box-sizing:border-box;border:1px solid #000;"></div><div style="position:absolute;left:399px;top:499px;width:7px;height:7px;box-sizing:border-box;border:1px solid #000;"></div><div style="position:absolute;left:411px;top:499px;width:7px;height:7px;box-sizing:border-box;border:1px solid #000;"></div><div style="position:absolute;left:423px;top:499px;width:7px;height:7px;box-sizing:border-box;border:1px solid #000;"></div><div style="position:absolute;left:435px;top:499px;width:7px;height:7px;box-sizing:border-box;border:1px solid #000;"></div><div style="position:absolute;left:447px;top:499px;width:7px;height:7px;box-sizing:border-box;border:1px solid #000;"></div><div style="position:absolute;left:459px;top:499px;width:7px;height:7px;box-sizing:border-box;border:1px solid #000;"></div><div style="position:absolute;left:279px;top:511px;width:7px;height:7px;box-sizing:border-box;border:1px solid #000;"></div><div style="position:absolute;left:291px;top:511px;width:7px;height:7px;box-sizing:border-box;border:1px solid #000;"></div><div style="position:absolute;left:303px;top:511px;width:7px;height:7px;box-sizing:border-box;border:1px solid #000;"></div><div style="position:absolute;left:315px;top:511px;width:7px;height:7px;box-sizing:border-box;border:1px solid #000;"></div><div style="position:absolute;left:327px;top:511px;width:7px;height:7px;box-sizing:border-box;border:1px solid #000;"></div><div style="position:absolute;left:339px;top:511px;width:7px;height:7px;box-sizing:border-box;border:1px solid #000;"></div><div style="position:absolute;left:351px;top:511px;width:7px;height:7px;box-sizing:border-box;border:1px solid #000;"></div><div style="position:absolute;left:363px;top:511px;width:7px;height:7px;box-sizing:border-box;border:1px solid #000;"></div><div style="position:absolute;left:375px;top:511px;width:7px;height:7px;box-sizing:border-box;border:1px solid #000;"></div><div style="position:absolute;left:387px;top:511px;width:7px;height:7px;box-sizing:border-box;border:1px solid #000;"></div><div style="position:absolute;left:399px;top:511px;width:7px;height:7px;box-sizing:border-box;border:1px solid #000;"></div><div style="position:absolute;left:411px;top:511px;width:7px;height:7px;box-sizing:border-box;border:1px solid #000;"></div><div style="position:absolute;left:423px;top:511px;width:7px;height:7px;box-sizing:border-box;border:1px solid #000;"></div><div style="position:absolute;left:435px;top:511px;width:7px;height:7px;box-sizing:border-box;border:1px solid #000;"></div><div style="position:absolute;left:447px;top:511px;width:7px;height:7px;box-sizing:border-box;border:1px solid #000;"></div><div style="position:absolute;left:459px;top:511px;width:7px;height:7px;box-sizing:border-box;border:1px solid #000;"></div>
<div style="position:absolute;left:482px;top:401px;width:218px;height:126px;box-sizing:border-box;border:1px solid #3d84c8;border-radius:4px;"></div>
<div style="position:absolute;left:493px;top:399px;width:102.0px;height:5px;background:#fff;"></div>
<div style="position:absolute;left:496.21px;top:391.65px;font-family:'Liberation Sans', sans-serif;font-size:14px;line-height:14px;font-weight:400;color:#1414f8;letter-spacing:-0.102px;white-space:pre;"><span>Ch.5 - Disabled</span></div>
<div style="position:absolute;left:489.14px;top:410.75px;font-family:'Liberation Sans', sans-serif;font-size:14px;line-height:14px;font-weight:400;color:#000;letter-spacing:-0.986px;white-space:pre;"><span>RF:</span></div>
<div style="position:absolute;left:526.90px;top:410.75px;font-family:'Liberation Sans', sans-serif;font-size:14px;line-height:14px;font-weight:400;color:#000;letter-spacing:0.000px;white-space:pre;"><span>-</span></div>
<div style="position:absolute;left:573.39px;top:410.75px;font-family:'Liberation Sans', sans-serif;font-size:14px;line-height:14px;font-weight:400;color:#000;letter-spacing:-0.745px;white-space:pre;"><span>MPX:</span></div>
<div style="position:absolute;left:619.80px;top:410.75px;font-family:'Liberation Sans', sans-serif;font-size:14px;line-height:14px;font-weight:400;color:#000;letter-spacing:0.000px;white-space:pre;"><span>-</span></div>
<div style="position:absolute;left:489.14px;top:429.85px;font-family:'Liberation Sans', sans-serif;font-size:14px;line-height:14px;font-weight:400;color:#000;letter-spacing:0.300px;white-space:pre;"><span>Left:</span></div>
<div style="position:absolute;left:526.90px;top:429.85px;font-family:'Liberation Sans', sans-serif;font-size:14px;line-height:14px;font-weight:400;color:#000;letter-spacing:0.000px;white-space:pre;"><span>-</span></div>
<div style="position:absolute;left:573.39px;top:429.85px;font-family:'Liberation Sans', sans-serif;font-size:14px;line-height:14px;font-weight:400;color:#000;letter-spacing:0.173px;white-space:pre;"><span>Right:</span></div>
<div style="position:absolute;left:619.80px;top:429.85px;font-family:'Liberation Sans', sans-serif;font-size:14px;line-height:14px;font-weight:400;color:#000;letter-spacing:0.000px;white-space:pre;"><span>-</span></div>
<div style="position:absolute;left:489.14px;top:448.75px;font-family:'Liberation Sans', sans-serif;font-size:14px;line-height:14px;font-weight:400;color:#000;letter-spacing:0.124px;white-space:pre;"><span>Pilot:</span></div>
<div style="position:absolute;left:526.90px;top:448.75px;font-family:'Liberation Sans', sans-serif;font-size:14px;line-height:14px;font-weight:400;color:#000;letter-spacing:0.000px;white-space:pre;"><span>-</span></div>
<div style="position:absolute;left:573.39px;top:448.75px;font-family:'Liberation Sans', sans-serif;font-size:14px;line-height:14px;font-weight:400;color:#000;letter-spacing:-0.706px;white-space:pre;"><span>RDS:</span></div>
<div style="position:absolute;left:619.80px;top:448.75px;font-family:'Liberation Sans', sans-serif;font-size:14px;line-height:14px;font-weight:400;color:#000;letter-spacing:0.000px;white-space:pre;"><span>-</span></div>
<div style="position:absolute;left:525.72px;top:467.85px;font-family:'Liberation Sans', sans-serif;font-size:14px;line-height:14px;font-weight:400;color:#000;letter-spacing:-0.372px;white-space:pre;"><span>MPX Power:</span></div>
<div style="position:absolute;left:619.80px;top:467.85px;font-family:'Liberation Sans', sans-serif;font-size:14px;line-height:14px;font-weight:400;color:#000;letter-spacing:0.000px;white-space:pre;"><span>-</span></div>
<div style="position:absolute;left:497.5px;top:485.66px;width:20px;text-align:center;font-family:'Liberation Sans', sans-serif;font-size:9.5px;line-height:9.5px;letter-spacing:-0.6px;color:#000;">0</div><div style="position:absolute;left:509.5px;top:485.66px;width:20px;text-align:center;font-family:'Liberation Sans', sans-serif;font-size:9.5px;line-height:9.5px;letter-spacing:-0.6px;color:#000;">1</div><div style="position:absolute;left:521.5px;top:485.66px;width:20px;text-align:center;font-family:'Liberation Sans', sans-serif;font-size:9.5px;line-height:9.5px;letter-spacing:-0.6px;color:#000;">2</div><div style="position:absolute;left:533.5px;top:485.66px;width:20px;text-align:center;font-family:'Liberation Sans', sans-serif;font-size:9.5px;line-height:9.5px;letter-spacing:-0.6px;color:#000;">3</div><div style="position:absolute;left:545.5px;top:485.66px;width:20px;text-align:center;font-family:'Liberation Sans', sans-serif;font-size:9.5px;line-height:9.5px;letter-spacing:-0.6px;color:#000;">4</div><div style="position:absolute;left:557.5px;top:485.66px;width:20px;text-align:center;font-family:'Liberation Sans', sans-serif;font-size:9.5px;line-height:9.5px;letter-spacing:-0.6px;color:#000;">5</div><div style="position:absolute;left:569.5px;top:485.66px;width:20px;text-align:center;font-family:'Liberation Sans', sans-serif;font-size:9.5px;line-height:9.5px;letter-spacing:-0.6px;color:#000;">6</div><div style="position:absolute;left:581.5px;top:485.66px;width:20px;text-align:center;font-family:'Liberation Sans', sans-serif;font-size:9.5px;line-height:9.5px;letter-spacing:-0.6px;color:#000;">7</div><div style="position:absolute;left:593.5px;top:485.66px;width:20px;text-align:center;font-family:'Liberation Sans', sans-serif;font-size:9.5px;line-height:9.5px;letter-spacing:-0.6px;color:#000;">8</div><div style="position:absolute;left:605.5px;top:485.66px;width:20px;text-align:center;font-family:'Liberation Sans', sans-serif;font-size:9.5px;line-height:9.5px;letter-spacing:-0.6px;color:#000;">9</div><div style="position:absolute;left:617.5px;top:485.66px;width:20px;text-align:center;font-family:'Liberation Sans', sans-serif;font-size:9.5px;line-height:9.5px;letter-spacing:-0.6px;color:#000;">10</div><div style="position:absolute;left:629.5px;top:485.66px;width:20px;text-align:center;font-family:'Liberation Sans', sans-serif;font-size:9.5px;line-height:9.5px;letter-spacing:-0.6px;color:#000;">11</div><div style="position:absolute;left:641.5px;top:485.66px;width:20px;text-align:center;font-family:'Liberation Sans', sans-serif;font-size:9.5px;line-height:9.5px;letter-spacing:-0.6px;color:#000;">12</div><div style="position:absolute;left:653.5px;top:485.66px;width:20px;text-align:center;font-family:'Liberation Sans', sans-serif;font-size:9.5px;line-height:9.5px;letter-spacing:-0.6px;color:#000;">13</div><div style="position:absolute;left:665.5px;top:485.66px;width:20px;text-align:center;font-family:'Liberation Sans', sans-serif;font-size:9.5px;line-height:9.5px;letter-spacing:-0.6px;color:#000;">14</div><div style="position:absolute;left:677.5px;top:485.66px;width:20px;text-align:center;font-family:'Liberation Sans', sans-serif;font-size:9.5px;line-height:9.5px;letter-spacing:-0.6px;color:#000;">15</div>
<div style="position:absolute;left:492.00px;top:498.38px;font-family:'Liberation Sans', sans-serif;font-size:9px;line-height:9px;font-weight:400;color:#000;letter-spacing:0.000px;white-space:pre;"><span>A</span></div>
<div style="position:absolute;left:492.00px;top:510.38px;font-family:'Liberation Sans', sans-serif;font-size:9px;line-height:9px;font-weight:400;color:#000;letter-spacing:0.000px;white-space:pre;"><span>B</span></div>
<div style="position:absolute;left:504px;top:499px;width:7px;height:7px;box-sizing:border-box;border:1px solid #000;"></div><div style="position:absolute;left:516px;top:499px;width:7px;height:7px;box-sizing:border-box;border:1px solid #000;"></div><div style="position:absolute;left:528px;top:499px;width:7px;height:7px;box-sizing:border-box;border:1px solid #000;"></div><div style="position:absolute;left:540px;top:499px;width:7px;height:7px;box-sizing:border-box;border:1px solid #000;"></div><div style="position:absolute;left:552px;top:499px;width:7px;height:7px;box-sizing:border-box;border:1px solid #000;"></div><div style="position:absolute;left:564px;top:499px;width:7px;height:7px;box-sizing:border-box;border:1px solid #000;"></div><div style="position:absolute;left:576px;top:499px;width:7px;height:7px;box-sizing:border-box;border:1px solid #000;"></div><div style="position:absolute;left:588px;top:499px;width:7px;height:7px;box-sizing:border-box;border:1px solid #000;"></div><div style="position:absolute;left:600px;top:499px;width:7px;height:7px;box-sizing:border-box;border:1px solid #000;"></div><div style="position:absolute;left:612px;top:499px;width:7px;height:7px;box-sizing:border-box;border:1px solid #000;"></div><div style="position:absolute;left:624px;top:499px;width:7px;height:7px;box-sizing:border-box;border:1px solid #000;"></div><div style="position:absolute;left:636px;top:499px;width:7px;height:7px;box-sizing:border-box;border:1px solid #000;"></div><div style="position:absolute;left:648px;top:499px;width:7px;height:7px;box-sizing:border-box;border:1px solid #000;"></div><div style="position:absolute;left:660px;top:499px;width:7px;height:7px;box-sizing:border-box;border:1px solid #000;"></div><div style="position:absolute;left:672px;top:499px;width:7px;height:7px;box-sizing:border-box;border:1px solid #000;"></div><div style="position:absolute;left:684px;top:499px;width:7px;height:7px;box-sizing:border-box;border:1px solid #000;"></div><div style="position:absolute;left:504px;top:511px;width:7px;height:7px;box-sizing:border-box;border:1px solid #000;"></div><div style="position:absolute;left:516px;top:511px;width:7px;height:7px;box-sizing:border-box;border:1px solid #000;"></div><div style="position:absolute;left:528px;top:511px;width:7px;height:7px;box-sizing:border-box;border:1px solid #000;"></div><div style="position:absolute;left:540px;top:511px;width:7px;height:7px;box-sizing:border-box;border:1px solid #000;"></div><div style="position:absolute;left:552px;top:511px;width:7px;height:7px;box-sizing:border-box;border:1px solid #000;"></div><div style="position:absolute;left:564px;top:511px;width:7px;height:7px;box-sizing:border-box;border:1px solid #000;"></div><div style="position:absolute;left:576px;top:511px;width:7px;height:7px;box-sizing:border-box;border:1px solid #000;"></div><div style="position:absolute;left:588px;top:511px;width:7px;height:7px;box-sizing:border-box;border:1px solid #000;"></div><div style="position:absolute;left:600px;top:511px;width:7px;height:7px;box-sizing:border-box;border:1px solid #000;"></div><div style="position:absolute;left:612px;top:511px;width:7px;height:7px;box-sizing:border-box;border:1px solid #000;"></div><div style="position:absolute;left:624px;top:511px;width:7px;height:7px;box-sizing:border-box;border:1px solid #000;"></div><div style="position:absolute;left:636px;top:511px;width:7px;height:7px;box-sizing:border-box;border:1px solid #000;"></div><div style="position:absolute;left:648px;top:511px;width:7px;height:7px;box-sizing:border-box;border:1px solid #000;"></div><div style="position:absolute;left:660px;top:511px;width:7px;height:7px;box-sizing:border-box;border:1px solid #000;"></div><div style="position:absolute;left:672px;top:511px;width:7px;height:7px;box-sizing:border-box;border:1px solid #000;"></div><div style="position:absolute;left:684px;top:511px;width:7px;height:7px;box-sizing:border-box;border:1px solid #000;"></div>
<div style="position:absolute;left:707px;top:401px;width:218px;height:126px;box-sizing:border-box;border:1px solid #3d84c8;border-radius:4px;"></div>
<div style="position:absolute;left:718px;top:399px;width:102.0px;height:5px;background:#fff;"></div>
<div style="position:absolute;left:721.21px;top:391.65px;font-family:'Liberation Sans', sans-serif;font-size:14px;line-height:14px;font-weight:400;color:#1414f8;letter-spacing:-0.102px;white-space:pre;"><span>Ch.6 - Disabled</span></div>
<div style="position:absolute;left:714.14px;top:410.75px;font-family:'Liberation Sans', sans-serif;font-size:14px;line-height:14px;font-weight:400;color:#000;letter-spacing:-0.986px;white-space:pre;"><span>RF:</span></div>
<div style="position:absolute;left:751.90px;top:410.75px;font-family:'Liberation Sans', sans-serif;font-size:14px;line-height:14px;font-weight:400;color:#000;letter-spacing:0.000px;white-space:pre;"><span>-</span></div>
<div style="position:absolute;left:798.39px;top:410.75px;font-family:'Liberation Sans', sans-serif;font-size:14px;line-height:14px;font-weight:400;color:#000;letter-spacing:-0.745px;white-space:pre;"><span>MPX:</span></div>
<div style="position:absolute;left:844.80px;top:410.75px;font-family:'Liberation Sans', sans-serif;font-size:14px;line-height:14px;font-weight:400;color:#000;letter-spacing:0.000px;white-space:pre;"><span>-</span></div>
<div style="position:absolute;left:714.14px;top:429.85px;font-family:'Liberation Sans', sans-serif;font-size:14px;line-height:14px;font-weight:400;color:#000;letter-spacing:0.300px;white-space:pre;"><span>Left:</span></div>
<div style="position:absolute;left:751.90px;top:429.85px;font-family:'Liberation Sans', sans-serif;font-size:14px;line-height:14px;font-weight:400;color:#000;letter-spacing:0.000px;white-space:pre;"><span>-</span></div>
<div style="position:absolute;left:798.39px;top:429.85px;font-family:'Liberation Sans', sans-serif;font-size:14px;line-height:14px;font-weight:400;color:#000;letter-spacing:0.173px;white-space:pre;"><span>Right:</span></div>
<div style="position:absolute;left:844.80px;top:429.85px;font-family:'Liberation Sans', sans-serif;font-size:14px;line-height:14px;font-weight:400;color:#000;letter-spacing:0.000px;white-space:pre;"><span>-</span></div>
<div style="position:absolute;left:714.14px;top:448.75px;font-family:'Liberation Sans', sans-serif;font-size:14px;line-height:14px;font-weight:400;color:#000;letter-spacing:0.124px;white-space:pre;"><span>Pilot:</span></div>
<div style="position:absolute;left:751.90px;top:448.75px;font-family:'Liberation Sans', sans-serif;font-size:14px;line-height:14px;font-weight:400;color:#000;letter-spacing:0.000px;white-space:pre;"><span>-</span></div>
<div style="position:absolute;left:798.39px;top:448.75px;font-family:'Liberation Sans', sans-serif;font-size:14px;line-height:14px;font-weight:400;color:#000;letter-spacing:-0.706px;white-space:pre;"><span>RDS:</span></div>
<div style="position:absolute;left:844.80px;top:448.75px;font-family:'Liberation Sans', sans-serif;font-size:14px;line-height:14px;font-weight:400;color:#000;letter-spacing:0.000px;white-space:pre;"><span>-</span></div>
<div style="position:absolute;left:750.72px;top:467.85px;font-family:'Liberation Sans', sans-serif;font-size:14px;line-height:14px;font-weight:400;color:#000;letter-spacing:-0.372px;white-space:pre;"><span>MPX Power:</span></div>
<div style="position:absolute;left:844.80px;top:467.85px;font-family:'Liberation Sans', sans-serif;font-size:14px;line-height:14px;font-weight:400;color:#000;letter-spacing:0.000px;white-space:pre;"><span>-</span></div>
<div style="position:absolute;left:722.5px;top:485.66px;width:20px;text-align:center;font-family:'Liberation Sans', sans-serif;font-size:9.5px;line-height:9.5px;letter-spacing:-0.6px;color:#000;">0</div><div style="position:absolute;left:734.5px;top:485.66px;width:20px;text-align:center;font-family:'Liberation Sans', sans-serif;font-size:9.5px;line-height:9.5px;letter-spacing:-0.6px;color:#000;">1</div><div style="position:absolute;left:746.5px;top:485.66px;width:20px;text-align:center;font-family:'Liberation Sans', sans-serif;font-size:9.5px;line-height:9.5px;letter-spacing:-0.6px;color:#000;">2</div><div style="position:absolute;left:758.5px;top:485.66px;width:20px;text-align:center;font-family:'Liberation Sans', sans-serif;font-size:9.5px;line-height:9.5px;letter-spacing:-0.6px;color:#000;">3</div><div style="position:absolute;left:770.5px;top:485.66px;width:20px;text-align:center;font-family:'Liberation Sans', sans-serif;font-size:9.5px;line-height:9.5px;letter-spacing:-0.6px;color:#000;">4</div><div style="position:absolute;left:782.5px;top:485.66px;width:20px;text-align:center;font-family:'Liberation Sans', sans-serif;font-size:9.5px;line-height:9.5px;letter-spacing:-0.6px;color:#000;">5</div><div style="position:absolute;left:794.5px;top:485.66px;width:20px;text-align:center;font-family:'Liberation Sans', sans-serif;font-size:9.5px;line-height:9.5px;letter-spacing:-0.6px;color:#000;">6</div><div style="position:absolute;left:806.5px;top:485.66px;width:20px;text-align:center;font-family:'Liberation Sans', sans-serif;font-size:9.5px;line-height:9.5px;letter-spacing:-0.6px;color:#000;">7</div><div style="position:absolute;left:818.5px;top:485.66px;width:20px;text-align:center;font-family:'Liberation Sans', sans-serif;font-size:9.5px;line-height:9.5px;letter-spacing:-0.6px;color:#000;">8</div><div style="position:absolute;left:830.5px;top:485.66px;width:20px;text-align:center;font-family:'Liberation Sans', sans-serif;font-size:9.5px;line-height:9.5px;letter-spacing:-0.6px;color:#000;">9</div><div style="position:absolute;left:842.5px;top:485.66px;width:20px;text-align:center;font-family:'Liberation Sans', sans-serif;font-size:9.5px;line-height:9.5px;letter-spacing:-0.6px;color:#000;">10</div><div style="position:absolute;left:854.5px;top:485.66px;width:20px;text-align:center;font-family:'Liberation Sans', sans-serif;font-size:9.5px;line-height:9.5px;letter-spacing:-0.6px;color:#000;">11</div><div style="position:absolute;left:866.5px;top:485.66px;width:20px;text-align:center;font-family:'Liberation Sans', sans-serif;font-size:9.5px;line-height:9.5px;letter-spacing:-0.6px;color:#000;">12</div><div style="position:absolute;left:878.5px;top:485.66px;width:20px;text-align:center;font-family:'Liberation Sans', sans-serif;font-size:9.5px;line-height:9.5px;letter-spacing:-0.6px;color:#000;">13</div><div style="position:absolute;left:890.5px;top:485.66px;width:20px;text-align:center;font-family:'Liberation Sans', sans-serif;font-size:9.5px;line-height:9.5px;letter-spacing:-0.6px;color:#000;">14</div><div style="position:absolute;left:902.5px;top:485.66px;width:20px;text-align:center;font-family:'Liberation Sans', sans-serif;font-size:9.5px;line-height:9.5px;letter-spacing:-0.6px;color:#000;">15</div>
<div style="position:absolute;left:717.00px;top:498.38px;font-family:'Liberation Sans', sans-serif;font-size:9px;line-height:9px;font-weight:400;color:#000;letter-spacing:0.000px;white-space:pre;"><span>A</span></div>
<div style="position:absolute;left:717.00px;top:510.38px;font-family:'Liberation Sans', sans-serif;font-size:9px;line-height:9px;font-weight:400;color:#000;letter-spacing:0.000px;white-space:pre;"><span>B</span></div>
<div style="position:absolute;left:729px;top:499px;width:7px;height:7px;box-sizing:border-box;border:1px solid #000;"></div><div style="position:absolute;left:741px;top:499px;width:7px;height:7px;box-sizing:border-box;border:1px solid #000;"></div><div style="position:absolute;left:753px;top:499px;width:7px;height:7px;box-sizing:border-box;border:1px solid #000;"></div><div style="position:absolute;left:765px;top:499px;width:7px;height:7px;box-sizing:border-box;border:1px solid #000;"></div><div style="position:absolute;left:777px;top:499px;width:7px;height:7px;box-sizing:border-box;border:1px solid #000;"></div><div style="position:absolute;left:789px;top:499px;width:7px;height:7px;box-sizing:border-box;border:1px solid #000;"></div><div style="position:absolute;left:801px;top:499px;width:7px;height:7px;box-sizing:border-box;border:1px solid #000;"></div><div style="position:absolute;left:813px;top:499px;width:7px;height:7px;box-sizing:border-box;border:1px solid #000;"></div><div style="position:absolute;left:825px;top:499px;width:7px;height:7px;box-sizing:border-box;border:1px solid #000;"></div><div style="position:absolute;left:837px;top:499px;width:7px;height:7px;box-sizing:border-box;border:1px solid #000;"></div><div style="position:absolute;left:849px;top:499px;width:7px;height:7px;box-sizing:border-box;border:1px solid #000;"></div><div style="position:absolute;left:861px;top:499px;width:7px;height:7px;box-sizing:border-box;border:1px solid #000;"></div><div style="position:absolute;left:873px;top:499px;width:7px;height:7px;box-sizing:border-box;border:1px solid #000;"></div><div style="position:absolute;left:885px;top:499px;width:7px;height:7px;box-sizing:border-box;border:1px solid #000;"></div><div style="position:absolute;left:897px;top:499px;width:7px;height:7px;box-sizing:border-box;border:1px solid #000;"></div><div style="position:absolute;left:909px;top:499px;width:7px;height:7px;box-sizing:border-box;border:1px solid #000;"></div><div style="position:absolute;left:729px;top:511px;width:7px;height:7px;box-sizing:border-box;border:1px solid #000;"></div><div style="position:absolute;left:741px;top:511px;width:7px;height:7px;box-sizing:border-box;border:1px solid #000;"></div><div style="position:absolute;left:753px;top:511px;width:7px;height:7px;box-sizing:border-box;border:1px solid #000;"></div><div style="position:absolute;left:765px;top:511px;width:7px;height:7px;box-sizing:border-box;border:1px solid #000;"></div><div style="position:absolute;left:777px;top:511px;width:7px;height:7px;box-sizing:border-box;border:1px solid #000;"></div><div style="position:absolute;left:789px;top:511px;width:7px;height:7px;box-sizing:border-box;border:1px solid #000;"></div><div style="position:absolute;left:801px;top:511px;width:7px;height:7px;box-sizing:border-box;border:1px solid #000;"></div><div style="position:absolute;left:813px;top:511px;width:7px;height:7px;box-sizing:border-box;border:1px solid #000;"></div><div style="position:absolute;left:825px;top:511px;width:7px;height:7px;box-sizing:border-box;border:1px solid #000;"></div><div style="position:absolute;left:837px;top:511px;width:7px;height:7px;box-sizing:border-box;border:1px solid #000;"></div><div style="position:absolute;left:849px;top:511px;width:7px;height:7px;box-sizing:border-box;border:1px solid #000;"></div><div style="position:absolute;left:861px;top:511px;width:7px;height:7px;box-sizing:border-box;border:1px solid #000;"></div><div style="position:absolute;left:873px;top:511px;width:7px;height:7px;box-sizing:border-box;border:1px solid #000;"></div><div style="position:absolute;left:885px;top:511px;width:7px;height:7px;box-sizing:border-box;border:1px solid #000;"></div><div style="position:absolute;left:897px;top:511px;width:7px;height:7px;box-sizing:border-box;border:1px solid #000;"></div><div style="position:absolute;left:909px;top:511px;width:7px;height:7px;box-sizing:border-box;border:1px solid #000;"></div>
<div style="position:absolute;left:944px;top:102px;width:87px;height:28px;box-sizing:border-box;background:#e6e6e6;border:1px solid #3d84c8;border-radius:5px;box-shadow:inset 1px 1px 0 #f6f0ea;"></div>
<div style="position:absolute;left:943.07px;top:108.65px;width:87px;text-align:center;font-family:'Liberation Sans', sans-serif;font-size:14px;line-height:14px;font-weight:400;color:#1410f0;letter-spacing:0.158px;white-space:pre;"><span id="t55">Logout</span></div>
<div style="position:absolute;left:944px;top:222px;width:87px;height:28px;box-sizing:border-box;background:#e6e6e6;border:1px solid #3d84c8;border-radius:5px;box-shadow:inset 1px 1px 0 #f6f0ea;"></div>
<div style="position:absolute;left:943.23px;top:228.65px;width:87px;text-align:center;font-family:'Liberation Sans', sans-serif;font-size:14px;line-height:14px;font-weight:400;color:#1410f0;letter-spacing:-0.028px;white-space:pre;"><span id="t56">Main</span></div>
<div style="position:absolute;left:944px;top:252px;width:87px;height:28px;box-sizing:border-box;background:#e6e6e6;border:1px solid #3d84c8;border-radius:5px;box-shadow:inset 1px 1px 0 #f6f0ea;"></div>
<div style="position:absolute;left:942.67px;top:258.65px;width:87px;text-align:center;font-family:'Liberation Sans', sans-serif;font-size:14px;line-height:14px;font-weight:400;color:#1410f0;letter-spacing:-1.515px;white-space:pre;"><span id="t57">MPX</span></div>
<div style="position:absolute;left:944px;top:282px;width:87px;height:28px;box-sizing:border-box;background:#e6e6e6;border:1px solid #3d84c8;border-radius:5px;box-shadow:inset 1px 1px 0 #f6f0ea;"></div>
<div style="position:absolute;left:943.04px;top:288.65px;width:87px;text-align:center;font-family:'Liberation Sans', sans-serif;font-size:14px;line-height:14px;font-weight:400;color:#1410f0;letter-spacing:-0.344px;white-space:pre;"><span id="t58">Loudness</span></div>
<div style="position:absolute;left:944px;top:312px;width:87px;height:28px;box-sizing:border-box;background:#e6e6e6;border:1px solid #3d84c8;border-radius:5px;box-shadow:inset 1px 1px 0 #f6f0ea;"></div>
<div style="position:absolute;left:944.00px;top:318.65px;width:87px;text-align:center;font-family:'Liberation Sans', sans-serif;font-size:14px;line-height:14px;font-weight:400;color:#1410f0;letter-spacing:0.350px;white-space:pre;"><span>FM Graph</span></div>
<div style="position:absolute;left:944px;top:342px;width:87px;height:28px;box-sizing:border-box;background:#e6e6e6;border:1px solid #3d84c8;border-radius:5px;box-shadow:inset 1px 1px 0 #f6f0ea;"></div>
<div style="position:absolute;left:944.00px;top:348.65px;width:87px;text-align:center;font-family:'Liberation Sans', sans-serif;font-size:14px;line-height:14px;font-weight:400;color:#1410f0;letter-spacing:0.350px;white-space:pre;"><span>RDS</span></div>
<div style="position:absolute;left:944px;top:372px;width:87px;height:28px;box-sizing:border-box;background:#e6e6e6;border:1px solid #3d84c8;border-radius:5px;box-shadow:inset 1px 1px 0 #f6f0ea;"></div>
<div style="position:absolute;left:944.00px;top:378.65px;width:87px;text-align:center;font-family:'Liberation Sans', sans-serif;font-size:14px;line-height:14px;font-weight:400;color:#1410f0;letter-spacing:0.350px;white-space:pre;"><span>FFT</span></div>
<div style="position:absolute;left:944px;top:402px;width:87px;height:28px;box-sizing:border-box;background:#e6e6e6;border:1px solid #3d84c8;border-radius:5px;box-shadow:inset 1px 1px 0 #f6f0ea;"></div>
<div style="position:absolute;left:944.00px;top:408.65px;width:87px;text-align:center;font-family:'Liberation Sans', sans-serif;font-size:14px;line-height:14px;font-weight:400;color:#1410f0;letter-spacing:0.350px;white-space:pre;"><span>Scope</span></div>
<div style="position:absolute;left:944px;top:432px;width:87px;height:28px;box-sizing:border-box;background:#e6e6e6;border:1px solid #3d84c8;border-radius:5px;box-shadow:inset 1px 1px 0 #f6f0ea;"></div>
<div style="position:absolute;left:943.24px;top:438.65px;width:87px;text-align:center;font-family:'Liberation Sans', sans-serif;font-size:14px;line-height:14px;font-weight:400;color:#1410f0;letter-spacing:-0.383px;white-space:pre;"><span id="t59">Bandscan</span></div>
<div style="position:absolute;left:940px;top:462px;width:91px;height:28px;box-sizing:border-box;background:#fff;border:1px solid #3d84c8;border-left:none;border-radius:0 5px 5px 0;"></div>
<svg style="position:absolute;left:936px;top:455px" width="12" height="42" viewBox="936 455 12 42"><path d="M939 458 V463 H944 V462.5 H943.5 A3 3 0 0 1 940.5 459.5 V458 Z" fill="#fff"/><path d="M940.5 458 V459.5 A3 3 0 0 0 943.5 462.5 H945" fill="none" stroke="#3d84c8" stroke-width="1"/><path d="M939 494 V489 H944 V489.5 H943.5 A3 3 0 0 0 940.5 492.5 V494 Z" fill="#fff"/><path d="M940.5 494 V492.5 A3 3 0 0 1 943.5 489.5 H945" fill="none" stroke="#3d84c8" stroke-width="1"/></svg>
<div style="position:absolute;left:941.73px;top:468.95px;width:87px;text-align:center;font-family:'Liberation Sans', sans-serif;font-size:14px;line-height:14px;font-weight:700;color:#1410f0;letter-spacing:0.495px;white-space:pre;"><span id="t60">Status</span></div>
<div style="position:absolute;left:944px;top:492px;width:87px;height:28px;box-sizing:border-box;background:#e6e6e6;border:1px solid #3d84c8;border-radius:5px;box-shadow:inset 1px 1px 0 #f6f0ea;"></div>
<div style="position:absolute;left:943.04px;top:498.65px;width:87px;text-align:center;font-family:'Liberation Sans', sans-serif;font-size:14px;line-height:14px;font-weight:400;color:#1410f0;letter-spacing:-0.129px;white-space:pre;"><span id="t61">Log</span></div>
<div style="position:absolute;left:944px;top:522px;width:87px;height:28px;box-sizing:border-box;background:#e6e6e6;border:1px solid #3d84c8;border-radius:5px;box-shadow:inset 1px 1px 0 #f6f0ea;"></div>
<div style="position:absolute;left:944.00px;top:528.65px;width:87px;text-align:center;font-family:'Liberation Sans', sans-serif;font-size:14px;line-height:14px;font-weight:400;color:#1410f0;letter-spacing:0.350px;white-space:pre;"><span>Settings</span></div>
<div style="position:absolute;left:944px;top:604px;width:87px;height:28px;box-sizing:border-box;background:linear-gradient(#8ff08b 0,#8ef08a 44%,#84e680 44%,#84e47f 100%);border:1px solid #6d6570;border-radius:4px;"></div>
<svg style="position:absolute;left:970px;top:604px" width="34" height="28" viewBox="970 604 34 28"><path d="M975 614 H979 L984.7 609 V626 L979 621 H975 Z" fill="#000"/><path d="M984 614.5 L986.8 617.4 L984 620.3 Z" fill="#000"/><g fill="none" stroke="#000" stroke-width="1.9"><path d="M988.5 613.5 Q991 617.5 988.5 621.5"/><path d="M991.5 611.3 Q995.5 617.5 991.5 623.7"/><path d="M995.3 609.3 Q1000.5 617.5 995.3 625.7"/></g></svg>
</body></html>
